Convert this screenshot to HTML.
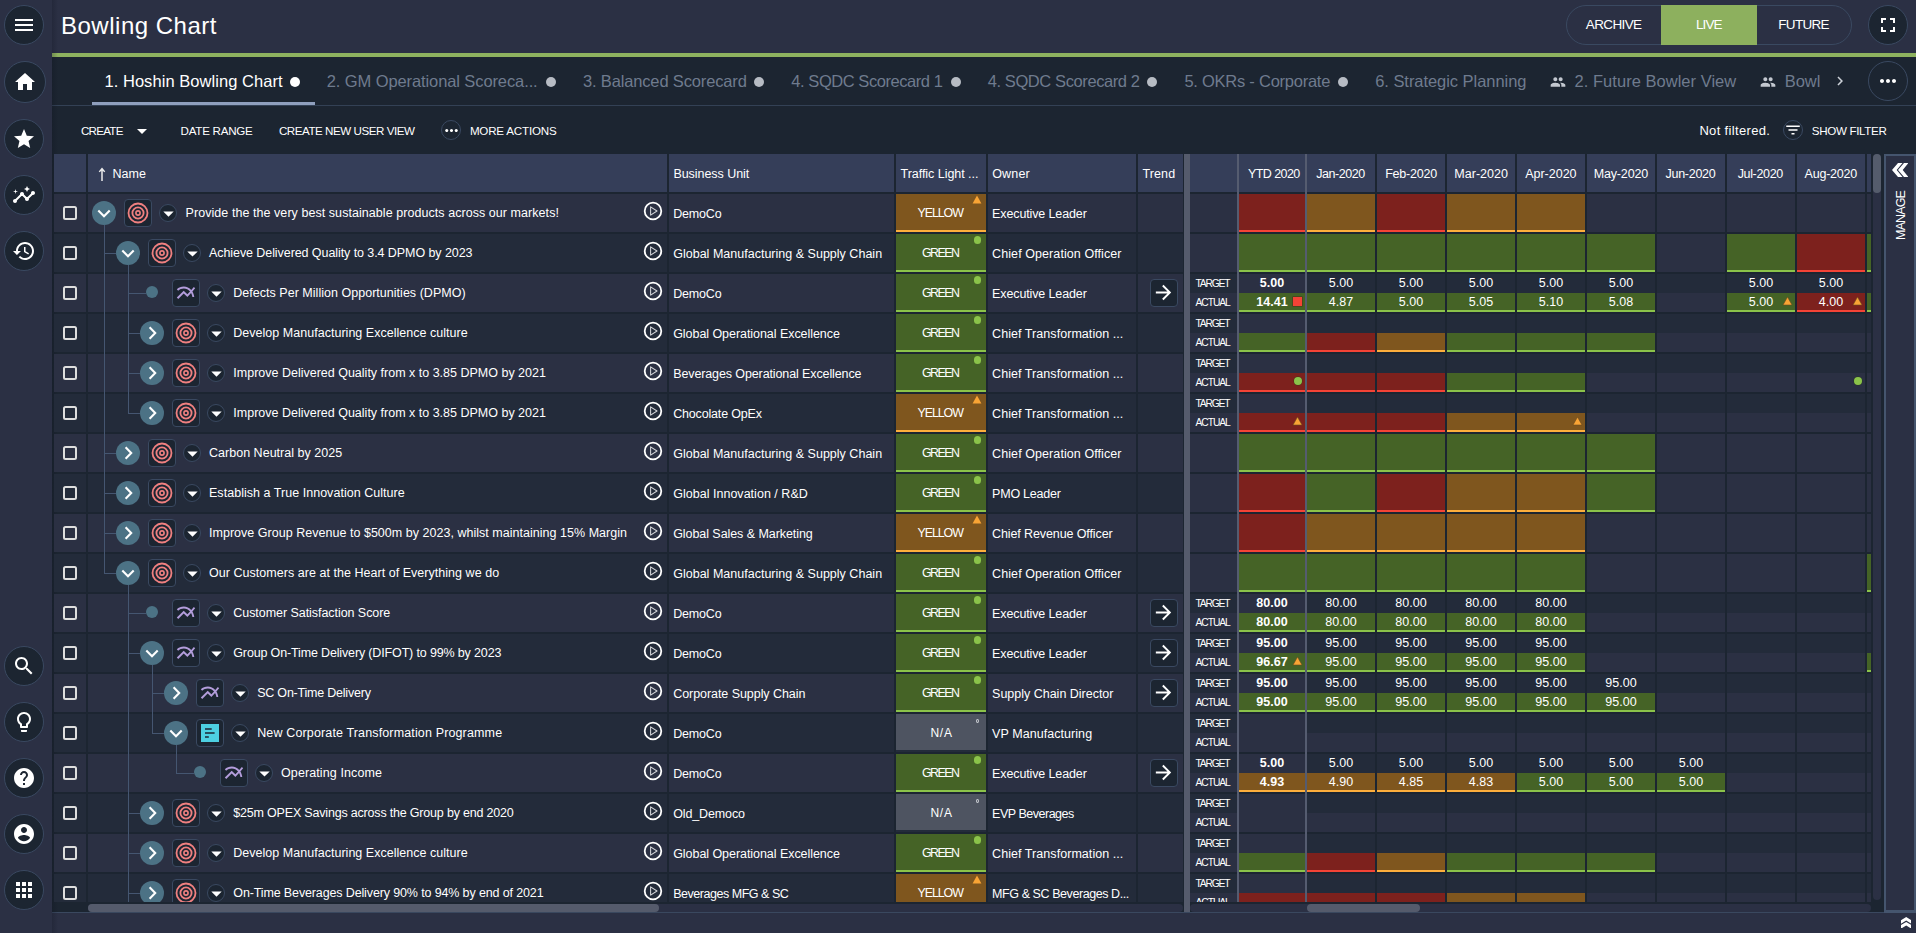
<!DOCTYPE html>
<html lang="en"><head><meta charset="utf-8"><title>Bowling Chart</title>
<style>
html,body{margin:0;padding:0;background:#1c2531;}
body{width:1916px;height:933px;position:relative;overflow:hidden;font-family:"Liberation Sans", sans-serif;color:#fff;}
body div,body svg,body span{position:absolute;}
.t{white-space:nowrap;line-height:20px;height:20px;}
#grid{left:0;top:0;width:1916px;height:902px;overflow:hidden;}
</style></head>
<body>
<div style="left:0px;top:0px;width:1916px;height:933px;background:#1c2531;"></div>
<div style="left:0px;top:0px;width:52px;height:933px;background:#2b3044;"></div>
<div style="left:52px;top:0px;width:1864px;height:53px;background:#2b3044;"></div>
<div style="left:52px;top:53px;width:1864px;height:4px;background:#8eb25f;"></div>
<div style="left:52px;top:57px;width:1864px;height:48px;background:#1c2531;"></div>
<div style="left:52px;top:105px;width:1864px;height:1px;background:#334155;"></div>
<div style="left:52px;top:912px;width:1864px;height:1px;background:#3a485f;"></div>
<div style="left:52px;top:913px;width:1864px;height:20px;background:#2b3044;"></div>
<div style="left:52px;top:0px;width:6px;height:933px;background:linear-gradient(90deg,rgba(10,14,26,.22),rgba(10,14,26,0));"></div>
<div id="grid">
<div style="left:54px;top:194px;width:32px;height:38px;background:#2b3043;"></div>
<div style="left:88px;top:194px;width:579px;height:38px;background:#2b3043;"></div>
<div style="left:669px;top:194px;width:225px;height:38px;background:#2b3043;"></div>
<div style="left:896px;top:194px;width:90px;height:38px;background:#2b3043;"></div>
<div style="left:988px;top:194px;width:148px;height:38px;background:#2b3043;"></div>
<div style="left:1138px;top:194px;width:45px;height:38px;background:#2b3043;"></div>
<div style="left:63px;top:206px;width:14px;height:14px;box-sizing:border-box;border:2px solid #dedede;border-radius:2.5px;"></div>
<div style="left:92px;top:201px;width:24px;height:24px;background:#4c7285;border-radius:50%;"></div>
<svg style="left:92px;top:201px" width="24" height="24" viewBox="0 0 24 24"><path d="M6.3 9.6 L12 15.2 L17.7 9.6" fill="none" stroke="#fff" stroke-width="2.1"/></svg>
<div style="left:124px;top:199px;width:28px;height:28px;background:#1c2531;box-sizing:border-box;border:1px solid #3a4961;border-radius:4px;"></div>
<svg style="left:124px;top:199px" width="28" height="28" viewBox="0 0 28 28"><g fill="none" stroke="#f08080"><circle cx="14" cy="14" r="9.5" stroke-width="1.8"/><circle cx="14" cy="14" r="5.6" stroke-width="1.8"/><circle cx="14" cy="14" r="2.1" stroke-width="1.6"/></g></svg>
<div style="left:159.0px;top:204.0px;width:18px;height:18px;background:#1c2531;border-radius:50%;box-sizing:border-box;border:1px solid #3a4961;"></div>
<svg style="left:155.5px;top:201px;" width="25" height="25" viewBox="0 0 24 24"><path fill="#fff" d="M7 10l5 5 5-5z"/></svg>
<svg style="left:642px;top:200px" width="22" height="22" viewBox="0 0 22 22"><circle cx="11" cy="11" r="8.3" fill="none" stroke="#fff" stroke-width="1.8"/><path d="M8.6 6.9V15.1L15 11Z" fill="none" stroke="#d4d6da" stroke-width="1.05" stroke-linejoin="round"/></svg>
<div style="left:896px;top:194px;width:90px;height:36px;background:#7f561e;"></div>
<div style="left:896px;top:230px;width:90px;height:2px;background:#fdae3c;"></div>
<svg style="left:972.2px;top:195px" width="10" height="9" viewBox="0 0 10 9"><path d="M5 .6 L9.4 8.6 H.6 Z" fill="#f9a435"/></svg>
<div style="left:1190px;top:194px;width:47px;height:38px;background:#2b3043;"></div>
<div style="left:1239px;top:194px;width:66px;height:38px;background:#2b3043;"></div>
<div style="left:1239px;top:194px;width:66px;height:36px;background:#7d211d;"></div>
<div style="left:1239px;top:230px;width:66px;height:2px;background:#f44336;"></div>
<div style="left:1307px;top:194px;width:68px;height:38px;background:#2b3043;"></div>
<div style="left:1307px;top:194px;width:68px;height:36px;background:#7f561e;"></div>
<div style="left:1307px;top:230px;width:68px;height:2px;background:#fdae3c;"></div>
<div style="left:1377px;top:194px;width:68px;height:38px;background:#2b3043;"></div>
<div style="left:1377px;top:194px;width:68px;height:36px;background:#7d211d;"></div>
<div style="left:1377px;top:230px;width:68px;height:2px;background:#f44336;"></div>
<div style="left:1447px;top:194px;width:68px;height:38px;background:#2b3043;"></div>
<div style="left:1447px;top:194px;width:68px;height:36px;background:#7f561e;"></div>
<div style="left:1447px;top:230px;width:68px;height:2px;background:#fdae3c;"></div>
<div style="left:1517px;top:194px;width:68px;height:38px;background:#2b3043;"></div>
<div style="left:1517px;top:194px;width:68px;height:36px;background:#7f561e;"></div>
<div style="left:1517px;top:230px;width:68px;height:2px;background:#fdae3c;"></div>
<div style="left:1587px;top:194px;width:68px;height:38px;background:#2b3043;"></div>
<div style="left:1657px;top:194px;width:68px;height:38px;background:#2b3043;"></div>
<div style="left:1727px;top:194px;width:68px;height:38px;background:#2b3043;"></div>
<div style="left:1797px;top:194px;width:68px;height:38px;background:#2b3043;"></div>
<div style="left:1867px;top:194px;width:4px;height:38px;background:#2b3043;"></div>
<div style="left:54px;top:234px;width:32px;height:38px;background:#232b3a;"></div>
<div style="left:88px;top:234px;width:579px;height:38px;background:#232b3a;"></div>
<div style="left:669px;top:234px;width:225px;height:38px;background:#232b3a;"></div>
<div style="left:896px;top:234px;width:90px;height:38px;background:#232b3a;"></div>
<div style="left:988px;top:234px;width:148px;height:38px;background:#232b3a;"></div>
<div style="left:1138px;top:234px;width:45px;height:38px;background:#232b3a;"></div>
<div style="left:63px;top:246px;width:14px;height:14px;box-sizing:border-box;border:2px solid #dedede;border-radius:2.5px;"></div>
<div style="left:116px;top:241px;width:24px;height:24px;background:#4c7285;border-radius:50%;"></div>
<svg style="left:116px;top:241px" width="24" height="24" viewBox="0 0 24 24"><path d="M6.3 9.6 L12 15.2 L17.7 9.6" fill="none" stroke="#fff" stroke-width="2.1"/></svg>
<div style="left:148px;top:239px;width:28px;height:28px;background:#1c2531;box-sizing:border-box;border:1px solid #3a4961;border-radius:4px;"></div>
<svg style="left:148px;top:239px" width="28" height="28" viewBox="0 0 28 28"><g fill="none" stroke="#f08080"><circle cx="14" cy="14" r="9.5" stroke-width="1.8"/><circle cx="14" cy="14" r="5.6" stroke-width="1.8"/><circle cx="14" cy="14" r="2.1" stroke-width="1.6"/></g></svg>
<div style="left:183.0px;top:244.0px;width:18px;height:18px;background:#1c2531;border-radius:50%;box-sizing:border-box;border:1px solid #3a4961;"></div>
<svg style="left:179.5px;top:241px;" width="25" height="25" viewBox="0 0 24 24"><path fill="#fff" d="M7 10l5 5 5-5z"/></svg>
<svg style="left:642px;top:240px" width="22" height="22" viewBox="0 0 22 22"><circle cx="11" cy="11" r="8.3" fill="none" stroke="#fff" stroke-width="1.8"/><path d="M8.6 6.9V15.1L15 11Z" fill="none" stroke="#d4d6da" stroke-width="1.05" stroke-linejoin="round"/></svg>
<div style="left:896px;top:234px;width:90px;height:36px;background:#456326;"></div>
<div style="left:896px;top:270px;width:90px;height:2px;background:#8bc34a;"></div>
<div style="left:973.6px;top:236.1px;width:7.7px;height:7.7px;background:#8bc34a;border-radius:50%;"></div>
<div style="left:1190px;top:234px;width:47px;height:38px;background:#2b3043;"></div>
<div style="left:1239px;top:234px;width:66px;height:38px;background:#2b3043;"></div>
<div style="left:1239px;top:234px;width:66px;height:36px;background:#456326;"></div>
<div style="left:1239px;top:270px;width:66px;height:2px;background:#8bc34a;"></div>
<div style="left:1307px;top:234px;width:68px;height:38px;background:#2b3043;"></div>
<div style="left:1307px;top:234px;width:68px;height:36px;background:#456326;"></div>
<div style="left:1307px;top:270px;width:68px;height:2px;background:#8bc34a;"></div>
<div style="left:1377px;top:234px;width:68px;height:38px;background:#2b3043;"></div>
<div style="left:1377px;top:234px;width:68px;height:36px;background:#456326;"></div>
<div style="left:1377px;top:270px;width:68px;height:2px;background:#8bc34a;"></div>
<div style="left:1447px;top:234px;width:68px;height:38px;background:#2b3043;"></div>
<div style="left:1447px;top:234px;width:68px;height:36px;background:#456326;"></div>
<div style="left:1447px;top:270px;width:68px;height:2px;background:#8bc34a;"></div>
<div style="left:1517px;top:234px;width:68px;height:38px;background:#2b3043;"></div>
<div style="left:1517px;top:234px;width:68px;height:36px;background:#456326;"></div>
<div style="left:1517px;top:270px;width:68px;height:2px;background:#8bc34a;"></div>
<div style="left:1587px;top:234px;width:68px;height:38px;background:#2b3043;"></div>
<div style="left:1587px;top:234px;width:68px;height:36px;background:#456326;"></div>
<div style="left:1587px;top:270px;width:68px;height:2px;background:#8bc34a;"></div>
<div style="left:1657px;top:234px;width:68px;height:38px;background:#2b3043;"></div>
<div style="left:1727px;top:234px;width:68px;height:38px;background:#2b3043;"></div>
<div style="left:1727px;top:234px;width:68px;height:36px;background:#456326;"></div>
<div style="left:1727px;top:270px;width:68px;height:2px;background:#8bc34a;"></div>
<div style="left:1797px;top:234px;width:68px;height:38px;background:#2b3043;"></div>
<div style="left:1797px;top:234px;width:68px;height:36px;background:#7d211d;"></div>
<div style="left:1797px;top:270px;width:68px;height:2px;background:#f44336;"></div>
<div style="left:1867px;top:234px;width:4px;height:38px;background:#2b3043;"></div>
<div style="left:1867px;top:234px;width:4px;height:36px;background:#456326;"></div>
<div style="left:1867px;top:270px;width:4px;height:2px;background:#8bc34a;"></div>
<div style="left:54px;top:274px;width:32px;height:38px;background:#2b3043;"></div>
<div style="left:88px;top:274px;width:579px;height:38px;background:#2b3043;"></div>
<div style="left:669px;top:274px;width:225px;height:38px;background:#2b3043;"></div>
<div style="left:896px;top:274px;width:90px;height:38px;background:#2b3043;"></div>
<div style="left:988px;top:274px;width:148px;height:38px;background:#2b3043;"></div>
<div style="left:1138px;top:274px;width:45px;height:38px;background:#2b3043;"></div>
<div style="left:63px;top:286px;width:14px;height:14px;box-sizing:border-box;border:2px solid #dedede;border-radius:2.5px;"></div>
<div style="left:146px;top:286px;width:12px;height:12px;background:#4c7285;border-radius:50%;"></div>
<div style="left:172px;top:279px;width:28px;height:28px;background:#1c2531;box-sizing:border-box;border:1px solid #3a4961;border-radius:4px;"></div>
<svg style="left:175px;top:281.5px;" width="22" height="22" viewBox="0 0 24 24"><path fill="#b39ddb" d="M22 6.92l-1.41-1.41-2.85 3.21C15.68 6.4 12.83 5 9.61 5 6.72 5 4.07 6.16 2 8l1.42 1.42C5.12 7.93 7.27 7 9.61 7c2.74 0 5.09 1.26 6.77 3.24l-2.88 3.24-4-4L2 16.99l1.5 1.5 6-6.01 4 4 4.05-4.55c.75 1.35 1.25 2.9 1.44 4.55H21c-.22-2.3-.95-4.39-2.04-6.14L22 6.92z"/></svg>
<div style="left:207.0px;top:284.0px;width:18px;height:18px;background:#1c2531;border-radius:50%;box-sizing:border-box;border:1px solid #3a4961;"></div>
<svg style="left:203.5px;top:281px;" width="25" height="25" viewBox="0 0 24 24"><path fill="#fff" d="M7 10l5 5 5-5z"/></svg>
<svg style="left:642px;top:280px" width="22" height="22" viewBox="0 0 22 22"><circle cx="11" cy="11" r="8.3" fill="none" stroke="#fff" stroke-width="1.8"/><path d="M8.6 6.9V15.1L15 11Z" fill="none" stroke="#d4d6da" stroke-width="1.05" stroke-linejoin="round"/></svg>
<div style="left:896px;top:274px;width:90px;height:36px;background:#456326;"></div>
<div style="left:896px;top:310px;width:90px;height:2px;background:#8bc34a;"></div>
<div style="left:973.6px;top:276.1px;width:7.7px;height:7.7px;background:#8bc34a;border-radius:50%;"></div>
<div style="left:1150px;top:279px;width:28px;height:28px;background:#1c2531;box-sizing:border-box;border:1px solid #3a4961;border-radius:4px;"></div>
<svg style="left:1152px;top:281px;" width="23" height="23" viewBox="0 0 24 24"><path fill="#fff" d="M12 4l-1.41 1.41L16.17 11H4v2h12.17l-5.58 5.59L12 20l8-8z"/></svg>
<div style="left:1190px;top:274px;width:47px;height:19px;background:#232b3a;"></div>
<div style="left:1190px;top:293px;width:47px;height:19px;background:#2b3043;"></div>
<div style="left:1239px;top:274px;width:66px;height:19px;background:#2b3043;"></div>
<div style="left:1239px;top:293px;width:66px;height:19px;background:#2b3043;"></div>
<div style="left:1239px;top:293px;width:66px;height:17px;background:#456326;"></div>
<div style="left:1239px;top:310px;width:66px;height:2px;background:#8bc34a;"></div>
<div style="left:1293.2px;top:296.5px;width:9px;height:9px;background:#f44336;box-shadow:0 0 0 .5px rgba(80,20,20,.7);"></div>
<div style="left:1307px;top:274px;width:68px;height:19px;background:#232b3a;"></div>
<div style="left:1307px;top:293px;width:68px;height:19px;background:#2b3043;"></div>
<div style="left:1307px;top:293px;width:68px;height:17px;background:#456326;"></div>
<div style="left:1307px;top:310px;width:68px;height:2px;background:#8bc34a;"></div>
<div style="left:1377px;top:274px;width:68px;height:19px;background:#232b3a;"></div>
<div style="left:1377px;top:293px;width:68px;height:19px;background:#2b3043;"></div>
<div style="left:1377px;top:293px;width:68px;height:17px;background:#456326;"></div>
<div style="left:1377px;top:310px;width:68px;height:2px;background:#8bc34a;"></div>
<div style="left:1447px;top:274px;width:68px;height:19px;background:#232b3a;"></div>
<div style="left:1447px;top:293px;width:68px;height:19px;background:#2b3043;"></div>
<div style="left:1447px;top:293px;width:68px;height:17px;background:#456326;"></div>
<div style="left:1447px;top:310px;width:68px;height:2px;background:#8bc34a;"></div>
<div style="left:1517px;top:274px;width:68px;height:19px;background:#232b3a;"></div>
<div style="left:1517px;top:293px;width:68px;height:19px;background:#2b3043;"></div>
<div style="left:1517px;top:293px;width:68px;height:17px;background:#456326;"></div>
<div style="left:1517px;top:310px;width:68px;height:2px;background:#8bc34a;"></div>
<div style="left:1587px;top:274px;width:68px;height:19px;background:#232b3a;"></div>
<div style="left:1587px;top:293px;width:68px;height:19px;background:#2b3043;"></div>
<div style="left:1587px;top:293px;width:68px;height:17px;background:#456326;"></div>
<div style="left:1587px;top:310px;width:68px;height:2px;background:#8bc34a;"></div>
<div style="left:1657px;top:274px;width:68px;height:19px;background:#232b3a;"></div>
<div style="left:1657px;top:293px;width:68px;height:19px;background:#2b3043;"></div>
<div style="left:1727px;top:274px;width:68px;height:19px;background:#232b3a;"></div>
<div style="left:1727px;top:293px;width:68px;height:19px;background:#2b3043;"></div>
<div style="left:1727px;top:293px;width:68px;height:17px;background:#456326;"></div>
<div style="left:1727px;top:310px;width:68px;height:2px;background:#8bc34a;"></div>
<svg style="left:1782.2px;top:296px" width="11" height="10" viewBox="0 0 11 10"><path d="M5.5 1 L10 9 H1 Z" fill="#f9a435" stroke="#6b4a1c" stroke-width=".6"/></svg>
<div style="left:1797px;top:274px;width:68px;height:19px;background:#232b3a;"></div>
<div style="left:1797px;top:293px;width:68px;height:19px;background:#2b3043;"></div>
<div style="left:1797px;top:293px;width:68px;height:17px;background:#7d211d;"></div>
<div style="left:1797px;top:310px;width:68px;height:2px;background:#f44336;"></div>
<svg style="left:1852.2px;top:296px" width="11" height="10" viewBox="0 0 11 10"><path d="M5.5 1 L10 9 H1 Z" fill="#f9a435" stroke="#6b4a1c" stroke-width=".6"/></svg>
<div style="left:1867px;top:274px;width:4px;height:19px;background:#232b3a;"></div>
<div style="left:1867px;top:293px;width:4px;height:19px;background:#2b3043;"></div>
<div style="left:1867px;top:293px;width:4px;height:17px;background:#456326;"></div>
<div style="left:1867px;top:310px;width:4px;height:2px;background:#8bc34a;"></div>
<div style="left:54px;top:314px;width:32px;height:38px;background:#232b3a;"></div>
<div style="left:88px;top:314px;width:579px;height:38px;background:#232b3a;"></div>
<div style="left:669px;top:314px;width:225px;height:38px;background:#232b3a;"></div>
<div style="left:896px;top:314px;width:90px;height:38px;background:#232b3a;"></div>
<div style="left:988px;top:314px;width:148px;height:38px;background:#232b3a;"></div>
<div style="left:1138px;top:314px;width:45px;height:38px;background:#232b3a;"></div>
<div style="left:63px;top:326px;width:14px;height:14px;box-sizing:border-box;border:2px solid #dedede;border-radius:2.5px;"></div>
<div style="left:140px;top:321px;width:24px;height:24px;background:#4c7285;border-radius:50%;"></div>
<svg style="left:140px;top:321px" width="24" height="24" viewBox="0 0 24 24"><path d="M9.6 6.3 L15.2 12 L9.6 17.7" fill="none" stroke="#fff" stroke-width="2.1"/></svg>
<div style="left:172px;top:319px;width:28px;height:28px;background:#1c2531;box-sizing:border-box;border:1px solid #3a4961;border-radius:4px;"></div>
<svg style="left:172px;top:319px" width="28" height="28" viewBox="0 0 28 28"><g fill="none" stroke="#f08080"><circle cx="14" cy="14" r="9.5" stroke-width="1.8"/><circle cx="14" cy="14" r="5.6" stroke-width="1.8"/><circle cx="14" cy="14" r="2.1" stroke-width="1.6"/></g></svg>
<div style="left:207.0px;top:324.0px;width:18px;height:18px;background:#1c2531;border-radius:50%;box-sizing:border-box;border:1px solid #3a4961;"></div>
<svg style="left:203.5px;top:321px;" width="25" height="25" viewBox="0 0 24 24"><path fill="#fff" d="M7 10l5 5 5-5z"/></svg>
<svg style="left:642px;top:320px" width="22" height="22" viewBox="0 0 22 22"><circle cx="11" cy="11" r="8.3" fill="none" stroke="#fff" stroke-width="1.8"/><path d="M8.6 6.9V15.1L15 11Z" fill="none" stroke="#d4d6da" stroke-width="1.05" stroke-linejoin="round"/></svg>
<div style="left:896px;top:314px;width:90px;height:36px;background:#456326;"></div>
<div style="left:896px;top:350px;width:90px;height:2px;background:#8bc34a;"></div>
<div style="left:973.6px;top:316.1px;width:7.7px;height:7.7px;background:#8bc34a;border-radius:50%;"></div>
<div style="left:1190px;top:314px;width:47px;height:19px;background:#232b3a;"></div>
<div style="left:1190px;top:333px;width:47px;height:19px;background:#2b3043;"></div>
<div style="left:1239px;top:314px;width:66px;height:19px;background:#2b3043;"></div>
<div style="left:1239px;top:333px;width:66px;height:19px;background:#2b3043;"></div>
<div style="left:1239px;top:333px;width:66px;height:17px;background:#456326;"></div>
<div style="left:1239px;top:350px;width:66px;height:2px;background:#8bc34a;"></div>
<div style="left:1307px;top:314px;width:68px;height:19px;background:#232b3a;"></div>
<div style="left:1307px;top:333px;width:68px;height:19px;background:#2b3043;"></div>
<div style="left:1307px;top:333px;width:68px;height:17px;background:#7d211d;"></div>
<div style="left:1307px;top:350px;width:68px;height:2px;background:#f44336;"></div>
<div style="left:1377px;top:314px;width:68px;height:19px;background:#232b3a;"></div>
<div style="left:1377px;top:333px;width:68px;height:19px;background:#2b3043;"></div>
<div style="left:1377px;top:333px;width:68px;height:17px;background:#7f561e;"></div>
<div style="left:1377px;top:350px;width:68px;height:2px;background:#fdae3c;"></div>
<div style="left:1447px;top:314px;width:68px;height:19px;background:#232b3a;"></div>
<div style="left:1447px;top:333px;width:68px;height:19px;background:#2b3043;"></div>
<div style="left:1447px;top:333px;width:68px;height:17px;background:#456326;"></div>
<div style="left:1447px;top:350px;width:68px;height:2px;background:#8bc34a;"></div>
<div style="left:1517px;top:314px;width:68px;height:19px;background:#232b3a;"></div>
<div style="left:1517px;top:333px;width:68px;height:19px;background:#2b3043;"></div>
<div style="left:1517px;top:333px;width:68px;height:17px;background:#456326;"></div>
<div style="left:1517px;top:350px;width:68px;height:2px;background:#8bc34a;"></div>
<div style="left:1587px;top:314px;width:68px;height:19px;background:#232b3a;"></div>
<div style="left:1587px;top:333px;width:68px;height:19px;background:#2b3043;"></div>
<div style="left:1587px;top:333px;width:68px;height:17px;background:#456326;"></div>
<div style="left:1587px;top:350px;width:68px;height:2px;background:#8bc34a;"></div>
<div style="left:1657px;top:314px;width:68px;height:19px;background:#232b3a;"></div>
<div style="left:1657px;top:333px;width:68px;height:19px;background:#2b3043;"></div>
<div style="left:1727px;top:314px;width:68px;height:19px;background:#232b3a;"></div>
<div style="left:1727px;top:333px;width:68px;height:19px;background:#2b3043;"></div>
<div style="left:1797px;top:314px;width:68px;height:19px;background:#232b3a;"></div>
<div style="left:1797px;top:333px;width:68px;height:19px;background:#2b3043;"></div>
<div style="left:1867px;top:314px;width:4px;height:19px;background:#232b3a;"></div>
<div style="left:1867px;top:333px;width:4px;height:19px;background:#2b3043;"></div>
<div style="left:54px;top:354px;width:32px;height:38px;background:#2b3043;"></div>
<div style="left:88px;top:354px;width:579px;height:38px;background:#2b3043;"></div>
<div style="left:669px;top:354px;width:225px;height:38px;background:#2b3043;"></div>
<div style="left:896px;top:354px;width:90px;height:38px;background:#2b3043;"></div>
<div style="left:988px;top:354px;width:148px;height:38px;background:#2b3043;"></div>
<div style="left:1138px;top:354px;width:45px;height:38px;background:#2b3043;"></div>
<div style="left:63px;top:366px;width:14px;height:14px;box-sizing:border-box;border:2px solid #dedede;border-radius:2.5px;"></div>
<div style="left:140px;top:361px;width:24px;height:24px;background:#4c7285;border-radius:50%;"></div>
<svg style="left:140px;top:361px" width="24" height="24" viewBox="0 0 24 24"><path d="M9.6 6.3 L15.2 12 L9.6 17.7" fill="none" stroke="#fff" stroke-width="2.1"/></svg>
<div style="left:172px;top:359px;width:28px;height:28px;background:#1c2531;box-sizing:border-box;border:1px solid #3a4961;border-radius:4px;"></div>
<svg style="left:172px;top:359px" width="28" height="28" viewBox="0 0 28 28"><g fill="none" stroke="#f08080"><circle cx="14" cy="14" r="9.5" stroke-width="1.8"/><circle cx="14" cy="14" r="5.6" stroke-width="1.8"/><circle cx="14" cy="14" r="2.1" stroke-width="1.6"/></g></svg>
<div style="left:207.0px;top:364.0px;width:18px;height:18px;background:#1c2531;border-radius:50%;box-sizing:border-box;border:1px solid #3a4961;"></div>
<svg style="left:203.5px;top:361px;" width="25" height="25" viewBox="0 0 24 24"><path fill="#fff" d="M7 10l5 5 5-5z"/></svg>
<svg style="left:642px;top:360px" width="22" height="22" viewBox="0 0 22 22"><circle cx="11" cy="11" r="8.3" fill="none" stroke="#fff" stroke-width="1.8"/><path d="M8.6 6.9V15.1L15 11Z" fill="none" stroke="#d4d6da" stroke-width="1.05" stroke-linejoin="round"/></svg>
<div style="left:896px;top:354px;width:90px;height:36px;background:#456326;"></div>
<div style="left:896px;top:390px;width:90px;height:2px;background:#8bc34a;"></div>
<div style="left:973.6px;top:356.1px;width:7.7px;height:7.7px;background:#8bc34a;border-radius:50%;"></div>
<div style="left:1190px;top:354px;width:47px;height:19px;background:#232b3a;"></div>
<div style="left:1190px;top:373px;width:47px;height:19px;background:#2b3043;"></div>
<div style="left:1239px;top:354px;width:66px;height:19px;background:#2b3043;"></div>
<div style="left:1239px;top:373px;width:66px;height:19px;background:#2b3043;"></div>
<div style="left:1239px;top:373px;width:66px;height:17px;background:#7d211d;"></div>
<div style="left:1239px;top:390px;width:66px;height:2px;background:#f44336;"></div>
<div style="left:1293.7px;top:377px;width:8px;height:8px;background:#8bc34a;border-radius:50%;box-shadow:0 0 0 .5px rgba(40,60,20,.6);"></div>
<div style="left:1307px;top:354px;width:68px;height:19px;background:#232b3a;"></div>
<div style="left:1307px;top:373px;width:68px;height:19px;background:#2b3043;"></div>
<div style="left:1307px;top:373px;width:68px;height:17px;background:#7d211d;"></div>
<div style="left:1307px;top:390px;width:68px;height:2px;background:#f44336;"></div>
<div style="left:1377px;top:354px;width:68px;height:19px;background:#232b3a;"></div>
<div style="left:1377px;top:373px;width:68px;height:19px;background:#2b3043;"></div>
<div style="left:1377px;top:373px;width:68px;height:17px;background:#7d211d;"></div>
<div style="left:1377px;top:390px;width:68px;height:2px;background:#f44336;"></div>
<div style="left:1447px;top:354px;width:68px;height:19px;background:#232b3a;"></div>
<div style="left:1447px;top:373px;width:68px;height:19px;background:#2b3043;"></div>
<div style="left:1447px;top:373px;width:68px;height:17px;background:#456326;"></div>
<div style="left:1447px;top:390px;width:68px;height:2px;background:#8bc34a;"></div>
<div style="left:1517px;top:354px;width:68px;height:19px;background:#232b3a;"></div>
<div style="left:1517px;top:373px;width:68px;height:19px;background:#2b3043;"></div>
<div style="left:1517px;top:373px;width:68px;height:17px;background:#456326;"></div>
<div style="left:1517px;top:390px;width:68px;height:2px;background:#8bc34a;"></div>
<div style="left:1587px;top:354px;width:68px;height:19px;background:#232b3a;"></div>
<div style="left:1587px;top:373px;width:68px;height:19px;background:#2b3043;"></div>
<div style="left:1657px;top:354px;width:68px;height:19px;background:#232b3a;"></div>
<div style="left:1657px;top:373px;width:68px;height:19px;background:#2b3043;"></div>
<div style="left:1727px;top:354px;width:68px;height:19px;background:#232b3a;"></div>
<div style="left:1727px;top:373px;width:68px;height:19px;background:#2b3043;"></div>
<div style="left:1797px;top:354px;width:68px;height:19px;background:#232b3a;"></div>
<div style="left:1797px;top:373px;width:68px;height:19px;background:#2b3043;"></div>
<div style="left:1853.7px;top:377px;width:8px;height:8px;background:#8bc34a;border-radius:50%;box-shadow:0 0 0 .5px rgba(40,60,20,.6);"></div>
<div style="left:1867px;top:354px;width:4px;height:19px;background:#232b3a;"></div>
<div style="left:1867px;top:373px;width:4px;height:19px;background:#2b3043;"></div>
<div style="left:54px;top:394px;width:32px;height:38px;background:#232b3a;"></div>
<div style="left:88px;top:394px;width:579px;height:38px;background:#232b3a;"></div>
<div style="left:669px;top:394px;width:225px;height:38px;background:#232b3a;"></div>
<div style="left:896px;top:394px;width:90px;height:38px;background:#232b3a;"></div>
<div style="left:988px;top:394px;width:148px;height:38px;background:#232b3a;"></div>
<div style="left:1138px;top:394px;width:45px;height:38px;background:#232b3a;"></div>
<div style="left:63px;top:406px;width:14px;height:14px;box-sizing:border-box;border:2px solid #dedede;border-radius:2.5px;"></div>
<div style="left:140px;top:401px;width:24px;height:24px;background:#4c7285;border-radius:50%;"></div>
<svg style="left:140px;top:401px" width="24" height="24" viewBox="0 0 24 24"><path d="M9.6 6.3 L15.2 12 L9.6 17.7" fill="none" stroke="#fff" stroke-width="2.1"/></svg>
<div style="left:172px;top:399px;width:28px;height:28px;background:#1c2531;box-sizing:border-box;border:1px solid #3a4961;border-radius:4px;"></div>
<svg style="left:172px;top:399px" width="28" height="28" viewBox="0 0 28 28"><g fill="none" stroke="#f08080"><circle cx="14" cy="14" r="9.5" stroke-width="1.8"/><circle cx="14" cy="14" r="5.6" stroke-width="1.8"/><circle cx="14" cy="14" r="2.1" stroke-width="1.6"/></g></svg>
<div style="left:207.0px;top:404.0px;width:18px;height:18px;background:#1c2531;border-radius:50%;box-sizing:border-box;border:1px solid #3a4961;"></div>
<svg style="left:203.5px;top:401px;" width="25" height="25" viewBox="0 0 24 24"><path fill="#fff" d="M7 10l5 5 5-5z"/></svg>
<svg style="left:642px;top:400px" width="22" height="22" viewBox="0 0 22 22"><circle cx="11" cy="11" r="8.3" fill="none" stroke="#fff" stroke-width="1.8"/><path d="M8.6 6.9V15.1L15 11Z" fill="none" stroke="#d4d6da" stroke-width="1.05" stroke-linejoin="round"/></svg>
<div style="left:896px;top:394px;width:90px;height:36px;background:#7f561e;"></div>
<div style="left:896px;top:430px;width:90px;height:2px;background:#fdae3c;"></div>
<svg style="left:972.2px;top:395px" width="10" height="9" viewBox="0 0 10 9"><path d="M5 .6 L9.4 8.6 H.6 Z" fill="#f9a435"/></svg>
<div style="left:1190px;top:394px;width:47px;height:19px;background:#232b3a;"></div>
<div style="left:1190px;top:413px;width:47px;height:19px;background:#2b3043;"></div>
<div style="left:1239px;top:394px;width:66px;height:19px;background:#2b3043;"></div>
<div style="left:1239px;top:413px;width:66px;height:19px;background:#2b3043;"></div>
<div style="left:1239px;top:413px;width:66px;height:17px;background:#7d211d;"></div>
<div style="left:1239px;top:430px;width:66px;height:2px;background:#f44336;"></div>
<svg style="left:1292.2px;top:416px" width="11" height="10" viewBox="0 0 11 10"><path d="M5.5 1 L10 9 H1 Z" fill="#f9a435" stroke="#6b4a1c" stroke-width=".6"/></svg>
<div style="left:1307px;top:394px;width:68px;height:19px;background:#232b3a;"></div>
<div style="left:1307px;top:413px;width:68px;height:19px;background:#2b3043;"></div>
<div style="left:1307px;top:413px;width:68px;height:17px;background:#7d211d;"></div>
<div style="left:1307px;top:430px;width:68px;height:2px;background:#f44336;"></div>
<div style="left:1377px;top:394px;width:68px;height:19px;background:#232b3a;"></div>
<div style="left:1377px;top:413px;width:68px;height:19px;background:#2b3043;"></div>
<div style="left:1377px;top:413px;width:68px;height:17px;background:#7d211d;"></div>
<div style="left:1377px;top:430px;width:68px;height:2px;background:#f44336;"></div>
<div style="left:1447px;top:394px;width:68px;height:19px;background:#232b3a;"></div>
<div style="left:1447px;top:413px;width:68px;height:19px;background:#2b3043;"></div>
<div style="left:1447px;top:413px;width:68px;height:17px;background:#7f561e;"></div>
<div style="left:1447px;top:430px;width:68px;height:2px;background:#fdae3c;"></div>
<div style="left:1517px;top:394px;width:68px;height:19px;background:#232b3a;"></div>
<div style="left:1517px;top:413px;width:68px;height:19px;background:#2b3043;"></div>
<div style="left:1517px;top:413px;width:68px;height:17px;background:#7f561e;"></div>
<div style="left:1517px;top:430px;width:68px;height:2px;background:#fdae3c;"></div>
<svg style="left:1572.2px;top:416px" width="11" height="10" viewBox="0 0 11 10"><path d="M5.5 1 L10 9 H1 Z" fill="#f9a435" stroke="#6b4a1c" stroke-width=".6"/></svg>
<div style="left:1587px;top:394px;width:68px;height:19px;background:#232b3a;"></div>
<div style="left:1587px;top:413px;width:68px;height:19px;background:#2b3043;"></div>
<div style="left:1657px;top:394px;width:68px;height:19px;background:#232b3a;"></div>
<div style="left:1657px;top:413px;width:68px;height:19px;background:#2b3043;"></div>
<div style="left:1727px;top:394px;width:68px;height:19px;background:#232b3a;"></div>
<div style="left:1727px;top:413px;width:68px;height:19px;background:#2b3043;"></div>
<div style="left:1797px;top:394px;width:68px;height:19px;background:#232b3a;"></div>
<div style="left:1797px;top:413px;width:68px;height:19px;background:#2b3043;"></div>
<div style="left:1867px;top:394px;width:4px;height:19px;background:#232b3a;"></div>
<div style="left:1867px;top:413px;width:4px;height:19px;background:#2b3043;"></div>
<div style="left:54px;top:434px;width:32px;height:38px;background:#2b3043;"></div>
<div style="left:88px;top:434px;width:579px;height:38px;background:#2b3043;"></div>
<div style="left:669px;top:434px;width:225px;height:38px;background:#2b3043;"></div>
<div style="left:896px;top:434px;width:90px;height:38px;background:#2b3043;"></div>
<div style="left:988px;top:434px;width:148px;height:38px;background:#2b3043;"></div>
<div style="left:1138px;top:434px;width:45px;height:38px;background:#2b3043;"></div>
<div style="left:63px;top:446px;width:14px;height:14px;box-sizing:border-box;border:2px solid #dedede;border-radius:2.5px;"></div>
<div style="left:116px;top:441px;width:24px;height:24px;background:#4c7285;border-radius:50%;"></div>
<svg style="left:116px;top:441px" width="24" height="24" viewBox="0 0 24 24"><path d="M9.6 6.3 L15.2 12 L9.6 17.7" fill="none" stroke="#fff" stroke-width="2.1"/></svg>
<div style="left:148px;top:439px;width:28px;height:28px;background:#1c2531;box-sizing:border-box;border:1px solid #3a4961;border-radius:4px;"></div>
<svg style="left:148px;top:439px" width="28" height="28" viewBox="0 0 28 28"><g fill="none" stroke="#f08080"><circle cx="14" cy="14" r="9.5" stroke-width="1.8"/><circle cx="14" cy="14" r="5.6" stroke-width="1.8"/><circle cx="14" cy="14" r="2.1" stroke-width="1.6"/></g></svg>
<div style="left:183.0px;top:444.0px;width:18px;height:18px;background:#1c2531;border-radius:50%;box-sizing:border-box;border:1px solid #3a4961;"></div>
<svg style="left:179.5px;top:441px;" width="25" height="25" viewBox="0 0 24 24"><path fill="#fff" d="M7 10l5 5 5-5z"/></svg>
<svg style="left:642px;top:440px" width="22" height="22" viewBox="0 0 22 22"><circle cx="11" cy="11" r="8.3" fill="none" stroke="#fff" stroke-width="1.8"/><path d="M8.6 6.9V15.1L15 11Z" fill="none" stroke="#d4d6da" stroke-width="1.05" stroke-linejoin="round"/></svg>
<div style="left:896px;top:434px;width:90px;height:36px;background:#456326;"></div>
<div style="left:896px;top:470px;width:90px;height:2px;background:#8bc34a;"></div>
<div style="left:973.6px;top:436.1px;width:7.7px;height:7.7px;background:#8bc34a;border-radius:50%;"></div>
<div style="left:1190px;top:434px;width:47px;height:38px;background:#2b3043;"></div>
<div style="left:1239px;top:434px;width:66px;height:38px;background:#2b3043;"></div>
<div style="left:1239px;top:434px;width:66px;height:36px;background:#456326;"></div>
<div style="left:1239px;top:470px;width:66px;height:2px;background:#8bc34a;"></div>
<div style="left:1307px;top:434px;width:68px;height:38px;background:#2b3043;"></div>
<div style="left:1307px;top:434px;width:68px;height:36px;background:#456326;"></div>
<div style="left:1307px;top:470px;width:68px;height:2px;background:#8bc34a;"></div>
<div style="left:1377px;top:434px;width:68px;height:38px;background:#2b3043;"></div>
<div style="left:1377px;top:434px;width:68px;height:36px;background:#456326;"></div>
<div style="left:1377px;top:470px;width:68px;height:2px;background:#8bc34a;"></div>
<div style="left:1447px;top:434px;width:68px;height:38px;background:#2b3043;"></div>
<div style="left:1447px;top:434px;width:68px;height:36px;background:#456326;"></div>
<div style="left:1447px;top:470px;width:68px;height:2px;background:#8bc34a;"></div>
<div style="left:1517px;top:434px;width:68px;height:38px;background:#2b3043;"></div>
<div style="left:1517px;top:434px;width:68px;height:36px;background:#456326;"></div>
<div style="left:1517px;top:470px;width:68px;height:2px;background:#8bc34a;"></div>
<div style="left:1587px;top:434px;width:68px;height:38px;background:#2b3043;"></div>
<div style="left:1587px;top:434px;width:68px;height:36px;background:#456326;"></div>
<div style="left:1587px;top:470px;width:68px;height:2px;background:#8bc34a;"></div>
<div style="left:1657px;top:434px;width:68px;height:38px;background:#2b3043;"></div>
<div style="left:1727px;top:434px;width:68px;height:38px;background:#2b3043;"></div>
<div style="left:1797px;top:434px;width:68px;height:38px;background:#2b3043;"></div>
<div style="left:1867px;top:434px;width:4px;height:38px;background:#2b3043;"></div>
<div style="left:54px;top:474px;width:32px;height:38px;background:#232b3a;"></div>
<div style="left:88px;top:474px;width:579px;height:38px;background:#232b3a;"></div>
<div style="left:669px;top:474px;width:225px;height:38px;background:#232b3a;"></div>
<div style="left:896px;top:474px;width:90px;height:38px;background:#232b3a;"></div>
<div style="left:988px;top:474px;width:148px;height:38px;background:#232b3a;"></div>
<div style="left:1138px;top:474px;width:45px;height:38px;background:#232b3a;"></div>
<div style="left:63px;top:486px;width:14px;height:14px;box-sizing:border-box;border:2px solid #dedede;border-radius:2.5px;"></div>
<div style="left:116px;top:481px;width:24px;height:24px;background:#4c7285;border-radius:50%;"></div>
<svg style="left:116px;top:481px" width="24" height="24" viewBox="0 0 24 24"><path d="M9.6 6.3 L15.2 12 L9.6 17.7" fill="none" stroke="#fff" stroke-width="2.1"/></svg>
<div style="left:148px;top:479px;width:28px;height:28px;background:#1c2531;box-sizing:border-box;border:1px solid #3a4961;border-radius:4px;"></div>
<svg style="left:148px;top:479px" width="28" height="28" viewBox="0 0 28 28"><g fill="none" stroke="#f08080"><circle cx="14" cy="14" r="9.5" stroke-width="1.8"/><circle cx="14" cy="14" r="5.6" stroke-width="1.8"/><circle cx="14" cy="14" r="2.1" stroke-width="1.6"/></g></svg>
<div style="left:183.0px;top:484.0px;width:18px;height:18px;background:#1c2531;border-radius:50%;box-sizing:border-box;border:1px solid #3a4961;"></div>
<svg style="left:179.5px;top:481px;" width="25" height="25" viewBox="0 0 24 24"><path fill="#fff" d="M7 10l5 5 5-5z"/></svg>
<svg style="left:642px;top:480px" width="22" height="22" viewBox="0 0 22 22"><circle cx="11" cy="11" r="8.3" fill="none" stroke="#fff" stroke-width="1.8"/><path d="M8.6 6.9V15.1L15 11Z" fill="none" stroke="#d4d6da" stroke-width="1.05" stroke-linejoin="round"/></svg>
<div style="left:896px;top:474px;width:90px;height:36px;background:#456326;"></div>
<div style="left:896px;top:510px;width:90px;height:2px;background:#8bc34a;"></div>
<div style="left:973.6px;top:476.1px;width:7.7px;height:7.7px;background:#8bc34a;border-radius:50%;"></div>
<div style="left:1190px;top:474px;width:47px;height:38px;background:#2b3043;"></div>
<div style="left:1239px;top:474px;width:66px;height:38px;background:#2b3043;"></div>
<div style="left:1239px;top:474px;width:66px;height:36px;background:#7d211d;"></div>
<div style="left:1239px;top:510px;width:66px;height:2px;background:#f44336;"></div>
<div style="left:1307px;top:474px;width:68px;height:38px;background:#2b3043;"></div>
<div style="left:1307px;top:474px;width:68px;height:36px;background:#456326;"></div>
<div style="left:1307px;top:510px;width:68px;height:2px;background:#8bc34a;"></div>
<div style="left:1377px;top:474px;width:68px;height:38px;background:#2b3043;"></div>
<div style="left:1377px;top:474px;width:68px;height:36px;background:#7d211d;"></div>
<div style="left:1377px;top:510px;width:68px;height:2px;background:#f44336;"></div>
<div style="left:1447px;top:474px;width:68px;height:38px;background:#2b3043;"></div>
<div style="left:1447px;top:474px;width:68px;height:36px;background:#7f561e;"></div>
<div style="left:1447px;top:510px;width:68px;height:2px;background:#fdae3c;"></div>
<div style="left:1517px;top:474px;width:68px;height:38px;background:#2b3043;"></div>
<div style="left:1517px;top:474px;width:68px;height:36px;background:#7f561e;"></div>
<div style="left:1517px;top:510px;width:68px;height:2px;background:#fdae3c;"></div>
<div style="left:1587px;top:474px;width:68px;height:38px;background:#2b3043;"></div>
<div style="left:1587px;top:474px;width:68px;height:36px;background:#456326;"></div>
<div style="left:1587px;top:510px;width:68px;height:2px;background:#8bc34a;"></div>
<div style="left:1657px;top:474px;width:68px;height:38px;background:#2b3043;"></div>
<div style="left:1727px;top:474px;width:68px;height:38px;background:#2b3043;"></div>
<div style="left:1797px;top:474px;width:68px;height:38px;background:#2b3043;"></div>
<div style="left:1867px;top:474px;width:4px;height:38px;background:#2b3043;"></div>
<div style="left:54px;top:514px;width:32px;height:38px;background:#2b3043;"></div>
<div style="left:88px;top:514px;width:579px;height:38px;background:#2b3043;"></div>
<div style="left:669px;top:514px;width:225px;height:38px;background:#2b3043;"></div>
<div style="left:896px;top:514px;width:90px;height:38px;background:#2b3043;"></div>
<div style="left:988px;top:514px;width:148px;height:38px;background:#2b3043;"></div>
<div style="left:1138px;top:514px;width:45px;height:38px;background:#2b3043;"></div>
<div style="left:63px;top:526px;width:14px;height:14px;box-sizing:border-box;border:2px solid #dedede;border-radius:2.5px;"></div>
<div style="left:116px;top:521px;width:24px;height:24px;background:#4c7285;border-radius:50%;"></div>
<svg style="left:116px;top:521px" width="24" height="24" viewBox="0 0 24 24"><path d="M9.6 6.3 L15.2 12 L9.6 17.7" fill="none" stroke="#fff" stroke-width="2.1"/></svg>
<div style="left:148px;top:519px;width:28px;height:28px;background:#1c2531;box-sizing:border-box;border:1px solid #3a4961;border-radius:4px;"></div>
<svg style="left:148px;top:519px" width="28" height="28" viewBox="0 0 28 28"><g fill="none" stroke="#f08080"><circle cx="14" cy="14" r="9.5" stroke-width="1.8"/><circle cx="14" cy="14" r="5.6" stroke-width="1.8"/><circle cx="14" cy="14" r="2.1" stroke-width="1.6"/></g></svg>
<div style="left:183.0px;top:524.0px;width:18px;height:18px;background:#1c2531;border-radius:50%;box-sizing:border-box;border:1px solid #3a4961;"></div>
<svg style="left:179.5px;top:521px;" width="25" height="25" viewBox="0 0 24 24"><path fill="#fff" d="M7 10l5 5 5-5z"/></svg>
<svg style="left:642px;top:520px" width="22" height="22" viewBox="0 0 22 22"><circle cx="11" cy="11" r="8.3" fill="none" stroke="#fff" stroke-width="1.8"/><path d="M8.6 6.9V15.1L15 11Z" fill="none" stroke="#d4d6da" stroke-width="1.05" stroke-linejoin="round"/></svg>
<div style="left:896px;top:514px;width:90px;height:36px;background:#7f561e;"></div>
<div style="left:896px;top:550px;width:90px;height:2px;background:#fdae3c;"></div>
<svg style="left:972.2px;top:515px" width="10" height="9" viewBox="0 0 10 9"><path d="M5 .6 L9.4 8.6 H.6 Z" fill="#f9a435"/></svg>
<div style="left:1190px;top:514px;width:47px;height:38px;background:#2b3043;"></div>
<div style="left:1239px;top:514px;width:66px;height:38px;background:#2b3043;"></div>
<div style="left:1239px;top:514px;width:66px;height:36px;background:#7d211d;"></div>
<div style="left:1239px;top:550px;width:66px;height:2px;background:#f44336;"></div>
<div style="left:1307px;top:514px;width:68px;height:38px;background:#2b3043;"></div>
<div style="left:1307px;top:514px;width:68px;height:36px;background:#7f561e;"></div>
<div style="left:1307px;top:550px;width:68px;height:2px;background:#fdae3c;"></div>
<div style="left:1377px;top:514px;width:68px;height:38px;background:#2b3043;"></div>
<div style="left:1377px;top:514px;width:68px;height:36px;background:#7f561e;"></div>
<div style="left:1377px;top:550px;width:68px;height:2px;background:#fdae3c;"></div>
<div style="left:1447px;top:514px;width:68px;height:38px;background:#2b3043;"></div>
<div style="left:1447px;top:514px;width:68px;height:36px;background:#7f561e;"></div>
<div style="left:1447px;top:550px;width:68px;height:2px;background:#fdae3c;"></div>
<div style="left:1517px;top:514px;width:68px;height:38px;background:#2b3043;"></div>
<div style="left:1517px;top:514px;width:68px;height:36px;background:#7f561e;"></div>
<div style="left:1517px;top:550px;width:68px;height:2px;background:#fdae3c;"></div>
<div style="left:1587px;top:514px;width:68px;height:38px;background:#2b3043;"></div>
<div style="left:1657px;top:514px;width:68px;height:38px;background:#2b3043;"></div>
<div style="left:1727px;top:514px;width:68px;height:38px;background:#2b3043;"></div>
<div style="left:1797px;top:514px;width:68px;height:38px;background:#2b3043;"></div>
<div style="left:1867px;top:514px;width:4px;height:38px;background:#2b3043;"></div>
<div style="left:54px;top:554px;width:32px;height:38px;background:#232b3a;"></div>
<div style="left:88px;top:554px;width:579px;height:38px;background:#232b3a;"></div>
<div style="left:669px;top:554px;width:225px;height:38px;background:#232b3a;"></div>
<div style="left:896px;top:554px;width:90px;height:38px;background:#232b3a;"></div>
<div style="left:988px;top:554px;width:148px;height:38px;background:#232b3a;"></div>
<div style="left:1138px;top:554px;width:45px;height:38px;background:#232b3a;"></div>
<div style="left:63px;top:566px;width:14px;height:14px;box-sizing:border-box;border:2px solid #dedede;border-radius:2.5px;"></div>
<div style="left:116px;top:561px;width:24px;height:24px;background:#4c7285;border-radius:50%;"></div>
<svg style="left:116px;top:561px" width="24" height="24" viewBox="0 0 24 24"><path d="M6.3 9.6 L12 15.2 L17.7 9.6" fill="none" stroke="#fff" stroke-width="2.1"/></svg>
<div style="left:148px;top:559px;width:28px;height:28px;background:#1c2531;box-sizing:border-box;border:1px solid #3a4961;border-radius:4px;"></div>
<svg style="left:148px;top:559px" width="28" height="28" viewBox="0 0 28 28"><g fill="none" stroke="#f08080"><circle cx="14" cy="14" r="9.5" stroke-width="1.8"/><circle cx="14" cy="14" r="5.6" stroke-width="1.8"/><circle cx="14" cy="14" r="2.1" stroke-width="1.6"/></g></svg>
<div style="left:183.0px;top:564.0px;width:18px;height:18px;background:#1c2531;border-radius:50%;box-sizing:border-box;border:1px solid #3a4961;"></div>
<svg style="left:179.5px;top:561px;" width="25" height="25" viewBox="0 0 24 24"><path fill="#fff" d="M7 10l5 5 5-5z"/></svg>
<svg style="left:642px;top:560px" width="22" height="22" viewBox="0 0 22 22"><circle cx="11" cy="11" r="8.3" fill="none" stroke="#fff" stroke-width="1.8"/><path d="M8.6 6.9V15.1L15 11Z" fill="none" stroke="#d4d6da" stroke-width="1.05" stroke-linejoin="round"/></svg>
<div style="left:896px;top:554px;width:90px;height:36px;background:#456326;"></div>
<div style="left:896px;top:590px;width:90px;height:2px;background:#8bc34a;"></div>
<div style="left:973.6px;top:556.1px;width:7.7px;height:7.7px;background:#8bc34a;border-radius:50%;"></div>
<div style="left:1190px;top:554px;width:47px;height:38px;background:#2b3043;"></div>
<div style="left:1239px;top:554px;width:66px;height:38px;background:#2b3043;"></div>
<div style="left:1239px;top:554px;width:66px;height:36px;background:#456326;"></div>
<div style="left:1239px;top:590px;width:66px;height:2px;background:#8bc34a;"></div>
<div style="left:1307px;top:554px;width:68px;height:38px;background:#2b3043;"></div>
<div style="left:1307px;top:554px;width:68px;height:36px;background:#456326;"></div>
<div style="left:1307px;top:590px;width:68px;height:2px;background:#8bc34a;"></div>
<div style="left:1377px;top:554px;width:68px;height:38px;background:#2b3043;"></div>
<div style="left:1377px;top:554px;width:68px;height:36px;background:#456326;"></div>
<div style="left:1377px;top:590px;width:68px;height:2px;background:#8bc34a;"></div>
<div style="left:1447px;top:554px;width:68px;height:38px;background:#2b3043;"></div>
<div style="left:1447px;top:554px;width:68px;height:36px;background:#456326;"></div>
<div style="left:1447px;top:590px;width:68px;height:2px;background:#8bc34a;"></div>
<div style="left:1517px;top:554px;width:68px;height:38px;background:#2b3043;"></div>
<div style="left:1517px;top:554px;width:68px;height:36px;background:#456326;"></div>
<div style="left:1517px;top:590px;width:68px;height:2px;background:#8bc34a;"></div>
<div style="left:1587px;top:554px;width:68px;height:38px;background:#2b3043;"></div>
<div style="left:1657px;top:554px;width:68px;height:38px;background:#2b3043;"></div>
<div style="left:1727px;top:554px;width:68px;height:38px;background:#2b3043;"></div>
<div style="left:1797px;top:554px;width:68px;height:38px;background:#2b3043;"></div>
<div style="left:1867px;top:554px;width:4px;height:38px;background:#2b3043;"></div>
<div style="left:1867px;top:554px;width:4px;height:36px;background:#456326;"></div>
<div style="left:1867px;top:590px;width:4px;height:2px;background:#8bc34a;"></div>
<div style="left:54px;top:594px;width:32px;height:38px;background:#2b3043;"></div>
<div style="left:88px;top:594px;width:579px;height:38px;background:#2b3043;"></div>
<div style="left:669px;top:594px;width:225px;height:38px;background:#2b3043;"></div>
<div style="left:896px;top:594px;width:90px;height:38px;background:#2b3043;"></div>
<div style="left:988px;top:594px;width:148px;height:38px;background:#2b3043;"></div>
<div style="left:1138px;top:594px;width:45px;height:38px;background:#2b3043;"></div>
<div style="left:63px;top:606px;width:14px;height:14px;box-sizing:border-box;border:2px solid #dedede;border-radius:2.5px;"></div>
<div style="left:146px;top:606px;width:12px;height:12px;background:#4c7285;border-radius:50%;"></div>
<div style="left:172px;top:599px;width:28px;height:28px;background:#1c2531;box-sizing:border-box;border:1px solid #3a4961;border-radius:4px;"></div>
<svg style="left:175px;top:601.5px;" width="22" height="22" viewBox="0 0 24 24"><path fill="#b39ddb" d="M22 6.92l-1.41-1.41-2.85 3.21C15.68 6.4 12.83 5 9.61 5 6.72 5 4.07 6.16 2 8l1.42 1.42C5.12 7.93 7.27 7 9.61 7c2.74 0 5.09 1.26 6.77 3.24l-2.88 3.24-4-4L2 16.99l1.5 1.5 6-6.01 4 4 4.05-4.55c.75 1.35 1.25 2.9 1.44 4.55H21c-.22-2.3-.95-4.39-2.04-6.14L22 6.92z"/></svg>
<div style="left:207.0px;top:604.0px;width:18px;height:18px;background:#1c2531;border-radius:50%;box-sizing:border-box;border:1px solid #3a4961;"></div>
<svg style="left:203.5px;top:601px;" width="25" height="25" viewBox="0 0 24 24"><path fill="#fff" d="M7 10l5 5 5-5z"/></svg>
<svg style="left:642px;top:600px" width="22" height="22" viewBox="0 0 22 22"><circle cx="11" cy="11" r="8.3" fill="none" stroke="#fff" stroke-width="1.8"/><path d="M8.6 6.9V15.1L15 11Z" fill="none" stroke="#d4d6da" stroke-width="1.05" stroke-linejoin="round"/></svg>
<div style="left:896px;top:594px;width:90px;height:36px;background:#456326;"></div>
<div style="left:896px;top:630px;width:90px;height:2px;background:#8bc34a;"></div>
<div style="left:973.6px;top:596.1px;width:7.7px;height:7.7px;background:#8bc34a;border-radius:50%;"></div>
<div style="left:1150px;top:599px;width:28px;height:28px;background:#1c2531;box-sizing:border-box;border:1px solid #3a4961;border-radius:4px;"></div>
<svg style="left:1152px;top:601px;" width="23" height="23" viewBox="0 0 24 24"><path fill="#fff" d="M12 4l-1.41 1.41L16.17 11H4v2h12.17l-5.58 5.59L12 20l8-8z"/></svg>
<div style="left:1190px;top:594px;width:47px;height:19px;background:#232b3a;"></div>
<div style="left:1190px;top:613px;width:47px;height:19px;background:#2b3043;"></div>
<div style="left:1239px;top:594px;width:66px;height:19px;background:#2b3043;"></div>
<div style="left:1239px;top:613px;width:66px;height:19px;background:#2b3043;"></div>
<div style="left:1239px;top:613px;width:66px;height:17px;background:#456326;"></div>
<div style="left:1239px;top:630px;width:66px;height:2px;background:#8bc34a;"></div>
<div style="left:1307px;top:594px;width:68px;height:19px;background:#232b3a;"></div>
<div style="left:1307px;top:613px;width:68px;height:19px;background:#2b3043;"></div>
<div style="left:1307px;top:613px;width:68px;height:17px;background:#456326;"></div>
<div style="left:1307px;top:630px;width:68px;height:2px;background:#8bc34a;"></div>
<div style="left:1377px;top:594px;width:68px;height:19px;background:#232b3a;"></div>
<div style="left:1377px;top:613px;width:68px;height:19px;background:#2b3043;"></div>
<div style="left:1377px;top:613px;width:68px;height:17px;background:#456326;"></div>
<div style="left:1377px;top:630px;width:68px;height:2px;background:#8bc34a;"></div>
<div style="left:1447px;top:594px;width:68px;height:19px;background:#232b3a;"></div>
<div style="left:1447px;top:613px;width:68px;height:19px;background:#2b3043;"></div>
<div style="left:1447px;top:613px;width:68px;height:17px;background:#456326;"></div>
<div style="left:1447px;top:630px;width:68px;height:2px;background:#8bc34a;"></div>
<div style="left:1517px;top:594px;width:68px;height:19px;background:#232b3a;"></div>
<div style="left:1517px;top:613px;width:68px;height:19px;background:#2b3043;"></div>
<div style="left:1517px;top:613px;width:68px;height:17px;background:#456326;"></div>
<div style="left:1517px;top:630px;width:68px;height:2px;background:#8bc34a;"></div>
<div style="left:1587px;top:594px;width:68px;height:19px;background:#232b3a;"></div>
<div style="left:1587px;top:613px;width:68px;height:19px;background:#2b3043;"></div>
<div style="left:1657px;top:594px;width:68px;height:19px;background:#232b3a;"></div>
<div style="left:1657px;top:613px;width:68px;height:19px;background:#2b3043;"></div>
<div style="left:1727px;top:594px;width:68px;height:19px;background:#232b3a;"></div>
<div style="left:1727px;top:613px;width:68px;height:19px;background:#2b3043;"></div>
<div style="left:1797px;top:594px;width:68px;height:19px;background:#232b3a;"></div>
<div style="left:1797px;top:613px;width:68px;height:19px;background:#2b3043;"></div>
<div style="left:1867px;top:594px;width:4px;height:19px;background:#232b3a;"></div>
<div style="left:1867px;top:613px;width:4px;height:19px;background:#2b3043;"></div>
<div style="left:54px;top:634px;width:32px;height:38px;background:#232b3a;"></div>
<div style="left:88px;top:634px;width:579px;height:38px;background:#232b3a;"></div>
<div style="left:669px;top:634px;width:225px;height:38px;background:#232b3a;"></div>
<div style="left:896px;top:634px;width:90px;height:38px;background:#232b3a;"></div>
<div style="left:988px;top:634px;width:148px;height:38px;background:#232b3a;"></div>
<div style="left:1138px;top:634px;width:45px;height:38px;background:#232b3a;"></div>
<div style="left:63px;top:646px;width:14px;height:14px;box-sizing:border-box;border:2px solid #dedede;border-radius:2.5px;"></div>
<div style="left:140px;top:641px;width:24px;height:24px;background:#4c7285;border-radius:50%;"></div>
<svg style="left:140px;top:641px" width="24" height="24" viewBox="0 0 24 24"><path d="M6.3 9.6 L12 15.2 L17.7 9.6" fill="none" stroke="#fff" stroke-width="2.1"/></svg>
<div style="left:172px;top:639px;width:28px;height:28px;background:#1c2531;box-sizing:border-box;border:1px solid #3a4961;border-radius:4px;"></div>
<svg style="left:175px;top:641.5px;" width="22" height="22" viewBox="0 0 24 24"><path fill="#b39ddb" d="M22 6.92l-1.41-1.41-2.85 3.21C15.68 6.4 12.83 5 9.61 5 6.72 5 4.07 6.16 2 8l1.42 1.42C5.12 7.93 7.27 7 9.61 7c2.74 0 5.09 1.26 6.77 3.24l-2.88 3.24-4-4L2 16.99l1.5 1.5 6-6.01 4 4 4.05-4.55c.75 1.35 1.25 2.9 1.44 4.55H21c-.22-2.3-.95-4.39-2.04-6.14L22 6.92z"/></svg>
<div style="left:207.0px;top:644.0px;width:18px;height:18px;background:#1c2531;border-radius:50%;box-sizing:border-box;border:1px solid #3a4961;"></div>
<svg style="left:203.5px;top:641px;" width="25" height="25" viewBox="0 0 24 24"><path fill="#fff" d="M7 10l5 5 5-5z"/></svg>
<svg style="left:642px;top:640px" width="22" height="22" viewBox="0 0 22 22"><circle cx="11" cy="11" r="8.3" fill="none" stroke="#fff" stroke-width="1.8"/><path d="M8.6 6.9V15.1L15 11Z" fill="none" stroke="#d4d6da" stroke-width="1.05" stroke-linejoin="round"/></svg>
<div style="left:896px;top:634px;width:90px;height:36px;background:#456326;"></div>
<div style="left:896px;top:670px;width:90px;height:2px;background:#8bc34a;"></div>
<div style="left:973.6px;top:636.1px;width:7.7px;height:7.7px;background:#8bc34a;border-radius:50%;"></div>
<div style="left:1150px;top:639px;width:28px;height:28px;background:#1c2531;box-sizing:border-box;border:1px solid #3a4961;border-radius:4px;"></div>
<svg style="left:1152px;top:641px;" width="23" height="23" viewBox="0 0 24 24"><path fill="#fff" d="M12 4l-1.41 1.41L16.17 11H4v2h12.17l-5.58 5.59L12 20l8-8z"/></svg>
<div style="left:1190px;top:634px;width:47px;height:19px;background:#232b3a;"></div>
<div style="left:1190px;top:653px;width:47px;height:19px;background:#2b3043;"></div>
<div style="left:1239px;top:634px;width:66px;height:19px;background:#2b3043;"></div>
<div style="left:1239px;top:653px;width:66px;height:19px;background:#2b3043;"></div>
<div style="left:1239px;top:653px;width:66px;height:17px;background:#456326;"></div>
<div style="left:1239px;top:670px;width:66px;height:2px;background:#8bc34a;"></div>
<svg style="left:1292.2px;top:656px" width="11" height="10" viewBox="0 0 11 10"><path d="M5.5 1 L10 9 H1 Z" fill="#f9a435" stroke="#6b4a1c" stroke-width=".6"/></svg>
<div style="left:1307px;top:634px;width:68px;height:19px;background:#232b3a;"></div>
<div style="left:1307px;top:653px;width:68px;height:19px;background:#2b3043;"></div>
<div style="left:1307px;top:653px;width:68px;height:17px;background:#456326;"></div>
<div style="left:1307px;top:670px;width:68px;height:2px;background:#8bc34a;"></div>
<div style="left:1377px;top:634px;width:68px;height:19px;background:#232b3a;"></div>
<div style="left:1377px;top:653px;width:68px;height:19px;background:#2b3043;"></div>
<div style="left:1377px;top:653px;width:68px;height:17px;background:#456326;"></div>
<div style="left:1377px;top:670px;width:68px;height:2px;background:#8bc34a;"></div>
<div style="left:1447px;top:634px;width:68px;height:19px;background:#232b3a;"></div>
<div style="left:1447px;top:653px;width:68px;height:19px;background:#2b3043;"></div>
<div style="left:1447px;top:653px;width:68px;height:17px;background:#456326;"></div>
<div style="left:1447px;top:670px;width:68px;height:2px;background:#8bc34a;"></div>
<div style="left:1517px;top:634px;width:68px;height:19px;background:#232b3a;"></div>
<div style="left:1517px;top:653px;width:68px;height:19px;background:#2b3043;"></div>
<div style="left:1517px;top:653px;width:68px;height:17px;background:#456326;"></div>
<div style="left:1517px;top:670px;width:68px;height:2px;background:#8bc34a;"></div>
<div style="left:1587px;top:634px;width:68px;height:19px;background:#232b3a;"></div>
<div style="left:1587px;top:653px;width:68px;height:19px;background:#2b3043;"></div>
<div style="left:1657px;top:634px;width:68px;height:19px;background:#232b3a;"></div>
<div style="left:1657px;top:653px;width:68px;height:19px;background:#2b3043;"></div>
<div style="left:1727px;top:634px;width:68px;height:19px;background:#232b3a;"></div>
<div style="left:1727px;top:653px;width:68px;height:19px;background:#2b3043;"></div>
<div style="left:1797px;top:634px;width:68px;height:19px;background:#232b3a;"></div>
<div style="left:1797px;top:653px;width:68px;height:19px;background:#2b3043;"></div>
<div style="left:1867px;top:634px;width:4px;height:19px;background:#232b3a;"></div>
<div style="left:1867px;top:653px;width:4px;height:19px;background:#2b3043;"></div>
<div style="left:1867px;top:653px;width:4px;height:17px;background:#456326;"></div>
<div style="left:1867px;top:670px;width:4px;height:2px;background:#8bc34a;"></div>
<div style="left:54px;top:674px;width:32px;height:38px;background:#2b3043;"></div>
<div style="left:88px;top:674px;width:579px;height:38px;background:#2b3043;"></div>
<div style="left:669px;top:674px;width:225px;height:38px;background:#2b3043;"></div>
<div style="left:896px;top:674px;width:90px;height:38px;background:#2b3043;"></div>
<div style="left:988px;top:674px;width:148px;height:38px;background:#2b3043;"></div>
<div style="left:1138px;top:674px;width:45px;height:38px;background:#2b3043;"></div>
<div style="left:63px;top:686px;width:14px;height:14px;box-sizing:border-box;border:2px solid #dedede;border-radius:2.5px;"></div>
<div style="left:164px;top:681px;width:24px;height:24px;background:#4c7285;border-radius:50%;"></div>
<svg style="left:164px;top:681px" width="24" height="24" viewBox="0 0 24 24"><path d="M9.6 6.3 L15.2 12 L9.6 17.7" fill="none" stroke="#fff" stroke-width="2.1"/></svg>
<div style="left:196px;top:679px;width:28px;height:28px;background:#1c2531;box-sizing:border-box;border:1px solid #3a4961;border-radius:4px;"></div>
<svg style="left:199px;top:681.5px;" width="22" height="22" viewBox="0 0 24 24"><path fill="#b39ddb" d="M22 6.92l-1.41-1.41-2.85 3.21C15.68 6.4 12.83 5 9.61 5 6.72 5 4.07 6.16 2 8l1.42 1.42C5.12 7.93 7.27 7 9.61 7c2.74 0 5.09 1.26 6.77 3.24l-2.88 3.24-4-4L2 16.99l1.5 1.5 6-6.01 4 4 4.05-4.55c.75 1.35 1.25 2.9 1.44 4.55H21c-.22-2.3-.95-4.39-2.04-6.14L22 6.92z"/></svg>
<div style="left:231.0px;top:684.0px;width:18px;height:18px;background:#1c2531;border-radius:50%;box-sizing:border-box;border:1px solid #3a4961;"></div>
<svg style="left:227.5px;top:681px;" width="25" height="25" viewBox="0 0 24 24"><path fill="#fff" d="M7 10l5 5 5-5z"/></svg>
<svg style="left:642px;top:680px" width="22" height="22" viewBox="0 0 22 22"><circle cx="11" cy="11" r="8.3" fill="none" stroke="#fff" stroke-width="1.8"/><path d="M8.6 6.9V15.1L15 11Z" fill="none" stroke="#d4d6da" stroke-width="1.05" stroke-linejoin="round"/></svg>
<div style="left:896px;top:674px;width:90px;height:36px;background:#456326;"></div>
<div style="left:896px;top:710px;width:90px;height:2px;background:#8bc34a;"></div>
<div style="left:973.6px;top:676.1px;width:7.7px;height:7.7px;background:#8bc34a;border-radius:50%;"></div>
<div style="left:1150px;top:679px;width:28px;height:28px;background:#1c2531;box-sizing:border-box;border:1px solid #3a4961;border-radius:4px;"></div>
<svg style="left:1152px;top:681px;" width="23" height="23" viewBox="0 0 24 24"><path fill="#fff" d="M12 4l-1.41 1.41L16.17 11H4v2h12.17l-5.58 5.59L12 20l8-8z"/></svg>
<div style="left:1190px;top:674px;width:47px;height:19px;background:#232b3a;"></div>
<div style="left:1190px;top:693px;width:47px;height:19px;background:#2b3043;"></div>
<div style="left:1239px;top:674px;width:66px;height:19px;background:#2b3043;"></div>
<div style="left:1239px;top:693px;width:66px;height:19px;background:#2b3043;"></div>
<div style="left:1239px;top:693px;width:66px;height:17px;background:#456326;"></div>
<div style="left:1239px;top:710px;width:66px;height:2px;background:#8bc34a;"></div>
<div style="left:1307px;top:674px;width:68px;height:19px;background:#232b3a;"></div>
<div style="left:1307px;top:693px;width:68px;height:19px;background:#2b3043;"></div>
<div style="left:1307px;top:693px;width:68px;height:17px;background:#456326;"></div>
<div style="left:1307px;top:710px;width:68px;height:2px;background:#8bc34a;"></div>
<div style="left:1377px;top:674px;width:68px;height:19px;background:#232b3a;"></div>
<div style="left:1377px;top:693px;width:68px;height:19px;background:#2b3043;"></div>
<div style="left:1377px;top:693px;width:68px;height:17px;background:#456326;"></div>
<div style="left:1377px;top:710px;width:68px;height:2px;background:#8bc34a;"></div>
<div style="left:1447px;top:674px;width:68px;height:19px;background:#232b3a;"></div>
<div style="left:1447px;top:693px;width:68px;height:19px;background:#2b3043;"></div>
<div style="left:1447px;top:693px;width:68px;height:17px;background:#456326;"></div>
<div style="left:1447px;top:710px;width:68px;height:2px;background:#8bc34a;"></div>
<div style="left:1517px;top:674px;width:68px;height:19px;background:#232b3a;"></div>
<div style="left:1517px;top:693px;width:68px;height:19px;background:#2b3043;"></div>
<div style="left:1517px;top:693px;width:68px;height:17px;background:#456326;"></div>
<div style="left:1517px;top:710px;width:68px;height:2px;background:#8bc34a;"></div>
<div style="left:1587px;top:674px;width:68px;height:19px;background:#232b3a;"></div>
<div style="left:1587px;top:693px;width:68px;height:19px;background:#2b3043;"></div>
<div style="left:1587px;top:693px;width:68px;height:17px;background:#456326;"></div>
<div style="left:1587px;top:710px;width:68px;height:2px;background:#8bc34a;"></div>
<div style="left:1657px;top:674px;width:68px;height:19px;background:#232b3a;"></div>
<div style="left:1657px;top:693px;width:68px;height:19px;background:#2b3043;"></div>
<div style="left:1727px;top:674px;width:68px;height:19px;background:#232b3a;"></div>
<div style="left:1727px;top:693px;width:68px;height:19px;background:#2b3043;"></div>
<div style="left:1797px;top:674px;width:68px;height:19px;background:#232b3a;"></div>
<div style="left:1797px;top:693px;width:68px;height:19px;background:#2b3043;"></div>
<div style="left:1867px;top:674px;width:4px;height:19px;background:#232b3a;"></div>
<div style="left:1867px;top:693px;width:4px;height:19px;background:#2b3043;"></div>
<div style="left:54px;top:714px;width:32px;height:38px;background:#232b3a;"></div>
<div style="left:88px;top:714px;width:579px;height:38px;background:#232b3a;"></div>
<div style="left:669px;top:714px;width:225px;height:38px;background:#232b3a;"></div>
<div style="left:896px;top:714px;width:90px;height:38px;background:#232b3a;"></div>
<div style="left:988px;top:714px;width:148px;height:38px;background:#232b3a;"></div>
<div style="left:1138px;top:714px;width:45px;height:38px;background:#232b3a;"></div>
<div style="left:63px;top:726px;width:14px;height:14px;box-sizing:border-box;border:2px solid #dedede;border-radius:2.5px;"></div>
<div style="left:164px;top:721px;width:24px;height:24px;background:#4c7285;border-radius:50%;"></div>
<svg style="left:164px;top:721px" width="24" height="24" viewBox="0 0 24 24"><path d="M6.3 9.6 L12 15.2 L17.7 9.6" fill="none" stroke="#fff" stroke-width="2.1"/></svg>
<div style="left:196px;top:719px;width:28px;height:28px;background:#1c2531;box-sizing:border-box;border:1px solid #3a4961;border-radius:4px;"></div>
<svg style="left:198px;top:721px" width="24" height="24" viewBox="0 0 24 24"><rect x="3" y="3" width="18" height="18" fill="#4dd0e1"/><path d="M7 8h6.7M7 12h9.6M7 16h3.8" stroke="#1c2433" stroke-width="1.6"/></svg>
<div style="left:231.0px;top:724.0px;width:18px;height:18px;background:#1c2531;border-radius:50%;box-sizing:border-box;border:1px solid #3a4961;"></div>
<svg style="left:227.5px;top:721px;" width="25" height="25" viewBox="0 0 24 24"><path fill="#fff" d="M7 10l5 5 5-5z"/></svg>
<svg style="left:642px;top:720px" width="22" height="22" viewBox="0 0 22 22"><circle cx="11" cy="11" r="8.3" fill="none" stroke="#fff" stroke-width="1.8"/><path d="M8.6 6.9V15.1L15 11Z" fill="none" stroke="#d4d6da" stroke-width="1.05" stroke-linejoin="round"/></svg>
<div style="left:896px;top:714px;width:90px;height:36px;background:#4e5461;"></div>
<div style="left:976px;top:718.5px;width:3px;height:4px;box-sizing:border-box;border:.8px solid #c9ccd2;border-radius:50%;"></div>
<div style="left:1190px;top:714px;width:47px;height:19px;background:#232b3a;"></div>
<div style="left:1190px;top:733px;width:47px;height:19px;background:#2b3043;"></div>
<div style="left:1239px;top:714px;width:66px;height:19px;background:#2b3043;"></div>
<div style="left:1239px;top:733px;width:66px;height:19px;background:#2b3043;"></div>
<div style="left:1307px;top:714px;width:68px;height:19px;background:#232b3a;"></div>
<div style="left:1307px;top:733px;width:68px;height:19px;background:#2b3043;"></div>
<div style="left:1377px;top:714px;width:68px;height:19px;background:#232b3a;"></div>
<div style="left:1377px;top:733px;width:68px;height:19px;background:#2b3043;"></div>
<div style="left:1447px;top:714px;width:68px;height:19px;background:#232b3a;"></div>
<div style="left:1447px;top:733px;width:68px;height:19px;background:#2b3043;"></div>
<div style="left:1517px;top:714px;width:68px;height:19px;background:#232b3a;"></div>
<div style="left:1517px;top:733px;width:68px;height:19px;background:#2b3043;"></div>
<div style="left:1587px;top:714px;width:68px;height:19px;background:#232b3a;"></div>
<div style="left:1587px;top:733px;width:68px;height:19px;background:#2b3043;"></div>
<div style="left:1657px;top:714px;width:68px;height:19px;background:#232b3a;"></div>
<div style="left:1657px;top:733px;width:68px;height:19px;background:#2b3043;"></div>
<div style="left:1727px;top:714px;width:68px;height:19px;background:#232b3a;"></div>
<div style="left:1727px;top:733px;width:68px;height:19px;background:#2b3043;"></div>
<div style="left:1797px;top:714px;width:68px;height:19px;background:#232b3a;"></div>
<div style="left:1797px;top:733px;width:68px;height:19px;background:#2b3043;"></div>
<div style="left:1867px;top:714px;width:4px;height:19px;background:#232b3a;"></div>
<div style="left:1867px;top:733px;width:4px;height:19px;background:#2b3043;"></div>
<div style="left:54px;top:754px;width:32px;height:38px;background:#2b3043;"></div>
<div style="left:88px;top:754px;width:579px;height:38px;background:#2b3043;"></div>
<div style="left:669px;top:754px;width:225px;height:38px;background:#2b3043;"></div>
<div style="left:896px;top:754px;width:90px;height:38px;background:#2b3043;"></div>
<div style="left:988px;top:754px;width:148px;height:38px;background:#2b3043;"></div>
<div style="left:1138px;top:754px;width:45px;height:38px;background:#2b3043;"></div>
<div style="left:63px;top:766px;width:14px;height:14px;box-sizing:border-box;border:2px solid #dedede;border-radius:2.5px;"></div>
<div style="left:194px;top:766px;width:12px;height:12px;background:#4c7285;border-radius:50%;"></div>
<div style="left:220px;top:759px;width:28px;height:28px;background:#1c2531;box-sizing:border-box;border:1px solid #3a4961;border-radius:4px;"></div>
<svg style="left:223px;top:761.5px;" width="22" height="22" viewBox="0 0 24 24"><path fill="#b39ddb" d="M22 6.92l-1.41-1.41-2.85 3.21C15.68 6.4 12.83 5 9.61 5 6.72 5 4.07 6.16 2 8l1.42 1.42C5.12 7.93 7.27 7 9.61 7c2.74 0 5.09 1.26 6.77 3.24l-2.88 3.24-4-4L2 16.99l1.5 1.5 6-6.01 4 4 4.05-4.55c.75 1.35 1.25 2.9 1.44 4.55H21c-.22-2.3-.95-4.39-2.04-6.14L22 6.92z"/></svg>
<div style="left:255.0px;top:764.0px;width:18px;height:18px;background:#1c2531;border-radius:50%;box-sizing:border-box;border:1px solid #3a4961;"></div>
<svg style="left:251.5px;top:761px;" width="25" height="25" viewBox="0 0 24 24"><path fill="#fff" d="M7 10l5 5 5-5z"/></svg>
<svg style="left:642px;top:760px" width="22" height="22" viewBox="0 0 22 22"><circle cx="11" cy="11" r="8.3" fill="none" stroke="#fff" stroke-width="1.8"/><path d="M8.6 6.9V15.1L15 11Z" fill="none" stroke="#d4d6da" stroke-width="1.05" stroke-linejoin="round"/></svg>
<div style="left:896px;top:754px;width:90px;height:36px;background:#456326;"></div>
<div style="left:896px;top:790px;width:90px;height:2px;background:#8bc34a;"></div>
<div style="left:973.6px;top:756.1px;width:7.7px;height:7.7px;background:#8bc34a;border-radius:50%;"></div>
<div style="left:1150px;top:759px;width:28px;height:28px;background:#1c2531;box-sizing:border-box;border:1px solid #3a4961;border-radius:4px;"></div>
<svg style="left:1152px;top:761px;" width="23" height="23" viewBox="0 0 24 24"><path fill="#fff" d="M12 4l-1.41 1.41L16.17 11H4v2h12.17l-5.58 5.59L12 20l8-8z"/></svg>
<div style="left:1190px;top:754px;width:47px;height:19px;background:#232b3a;"></div>
<div style="left:1190px;top:773px;width:47px;height:19px;background:#2b3043;"></div>
<div style="left:1239px;top:754px;width:66px;height:19px;background:#2b3043;"></div>
<div style="left:1239px;top:773px;width:66px;height:19px;background:#2b3043;"></div>
<div style="left:1239px;top:773px;width:66px;height:17px;background:#7f561e;"></div>
<div style="left:1239px;top:790px;width:66px;height:2px;background:#fdae3c;"></div>
<div style="left:1307px;top:754px;width:68px;height:19px;background:#232b3a;"></div>
<div style="left:1307px;top:773px;width:68px;height:19px;background:#2b3043;"></div>
<div style="left:1307px;top:773px;width:68px;height:17px;background:#7f561e;"></div>
<div style="left:1307px;top:790px;width:68px;height:2px;background:#fdae3c;"></div>
<div style="left:1377px;top:754px;width:68px;height:19px;background:#232b3a;"></div>
<div style="left:1377px;top:773px;width:68px;height:19px;background:#2b3043;"></div>
<div style="left:1377px;top:773px;width:68px;height:17px;background:#7f561e;"></div>
<div style="left:1377px;top:790px;width:68px;height:2px;background:#fdae3c;"></div>
<div style="left:1447px;top:754px;width:68px;height:19px;background:#232b3a;"></div>
<div style="left:1447px;top:773px;width:68px;height:19px;background:#2b3043;"></div>
<div style="left:1447px;top:773px;width:68px;height:17px;background:#7f561e;"></div>
<div style="left:1447px;top:790px;width:68px;height:2px;background:#fdae3c;"></div>
<div style="left:1517px;top:754px;width:68px;height:19px;background:#232b3a;"></div>
<div style="left:1517px;top:773px;width:68px;height:19px;background:#2b3043;"></div>
<div style="left:1517px;top:773px;width:68px;height:17px;background:#456326;"></div>
<div style="left:1517px;top:790px;width:68px;height:2px;background:#8bc34a;"></div>
<div style="left:1587px;top:754px;width:68px;height:19px;background:#232b3a;"></div>
<div style="left:1587px;top:773px;width:68px;height:19px;background:#2b3043;"></div>
<div style="left:1587px;top:773px;width:68px;height:17px;background:#456326;"></div>
<div style="left:1587px;top:790px;width:68px;height:2px;background:#8bc34a;"></div>
<div style="left:1657px;top:754px;width:68px;height:19px;background:#232b3a;"></div>
<div style="left:1657px;top:773px;width:68px;height:19px;background:#2b3043;"></div>
<div style="left:1657px;top:773px;width:68px;height:17px;background:#456326;"></div>
<div style="left:1657px;top:790px;width:68px;height:2px;background:#8bc34a;"></div>
<div style="left:1727px;top:754px;width:68px;height:19px;background:#232b3a;"></div>
<div style="left:1727px;top:773px;width:68px;height:19px;background:#2b3043;"></div>
<div style="left:1797px;top:754px;width:68px;height:19px;background:#232b3a;"></div>
<div style="left:1797px;top:773px;width:68px;height:19px;background:#2b3043;"></div>
<div style="left:1867px;top:754px;width:4px;height:19px;background:#232b3a;"></div>
<div style="left:1867px;top:773px;width:4px;height:19px;background:#2b3043;"></div>
<div style="left:54px;top:794px;width:32px;height:38px;background:#232b3a;"></div>
<div style="left:88px;top:794px;width:579px;height:38px;background:#232b3a;"></div>
<div style="left:669px;top:794px;width:225px;height:38px;background:#232b3a;"></div>
<div style="left:896px;top:794px;width:90px;height:38px;background:#232b3a;"></div>
<div style="left:988px;top:794px;width:148px;height:38px;background:#232b3a;"></div>
<div style="left:1138px;top:794px;width:45px;height:38px;background:#232b3a;"></div>
<div style="left:63px;top:806px;width:14px;height:14px;box-sizing:border-box;border:2px solid #dedede;border-radius:2.5px;"></div>
<div style="left:140px;top:801px;width:24px;height:24px;background:#4c7285;border-radius:50%;"></div>
<svg style="left:140px;top:801px" width="24" height="24" viewBox="0 0 24 24"><path d="M9.6 6.3 L15.2 12 L9.6 17.7" fill="none" stroke="#fff" stroke-width="2.1"/></svg>
<div style="left:172px;top:799px;width:28px;height:28px;background:#1c2531;box-sizing:border-box;border:1px solid #3a4961;border-radius:4px;"></div>
<svg style="left:172px;top:799px" width="28" height="28" viewBox="0 0 28 28"><g fill="none" stroke="#f08080"><circle cx="14" cy="14" r="9.5" stroke-width="1.8"/><circle cx="14" cy="14" r="5.6" stroke-width="1.8"/><circle cx="14" cy="14" r="2.1" stroke-width="1.6"/></g></svg>
<div style="left:207.0px;top:804.0px;width:18px;height:18px;background:#1c2531;border-radius:50%;box-sizing:border-box;border:1px solid #3a4961;"></div>
<svg style="left:203.5px;top:801px;" width="25" height="25" viewBox="0 0 24 24"><path fill="#fff" d="M7 10l5 5 5-5z"/></svg>
<svg style="left:642px;top:800px" width="22" height="22" viewBox="0 0 22 22"><circle cx="11" cy="11" r="8.3" fill="none" stroke="#fff" stroke-width="1.8"/><path d="M8.6 6.9V15.1L15 11Z" fill="none" stroke="#d4d6da" stroke-width="1.05" stroke-linejoin="round"/></svg>
<div style="left:896px;top:794px;width:90px;height:36px;background:#4e5461;"></div>
<div style="left:976px;top:798.5px;width:3px;height:4px;box-sizing:border-box;border:.8px solid #c9ccd2;border-radius:50%;"></div>
<div style="left:1190px;top:794px;width:47px;height:19px;background:#232b3a;"></div>
<div style="left:1190px;top:813px;width:47px;height:19px;background:#2b3043;"></div>
<div style="left:1239px;top:794px;width:66px;height:19px;background:#2b3043;"></div>
<div style="left:1239px;top:813px;width:66px;height:19px;background:#2b3043;"></div>
<div style="left:1307px;top:794px;width:68px;height:19px;background:#232b3a;"></div>
<div style="left:1307px;top:813px;width:68px;height:19px;background:#2b3043;"></div>
<div style="left:1377px;top:794px;width:68px;height:19px;background:#232b3a;"></div>
<div style="left:1377px;top:813px;width:68px;height:19px;background:#2b3043;"></div>
<div style="left:1447px;top:794px;width:68px;height:19px;background:#232b3a;"></div>
<div style="left:1447px;top:813px;width:68px;height:19px;background:#2b3043;"></div>
<div style="left:1517px;top:794px;width:68px;height:19px;background:#232b3a;"></div>
<div style="left:1517px;top:813px;width:68px;height:19px;background:#2b3043;"></div>
<div style="left:1587px;top:794px;width:68px;height:19px;background:#232b3a;"></div>
<div style="left:1587px;top:813px;width:68px;height:19px;background:#2b3043;"></div>
<div style="left:1657px;top:794px;width:68px;height:19px;background:#232b3a;"></div>
<div style="left:1657px;top:813px;width:68px;height:19px;background:#2b3043;"></div>
<div style="left:1727px;top:794px;width:68px;height:19px;background:#232b3a;"></div>
<div style="left:1727px;top:813px;width:68px;height:19px;background:#2b3043;"></div>
<div style="left:1797px;top:794px;width:68px;height:19px;background:#232b3a;"></div>
<div style="left:1797px;top:813px;width:68px;height:19px;background:#2b3043;"></div>
<div style="left:1867px;top:794px;width:4px;height:19px;background:#232b3a;"></div>
<div style="left:1867px;top:813px;width:4px;height:19px;background:#2b3043;"></div>
<div style="left:54px;top:834px;width:32px;height:38px;background:#2b3043;"></div>
<div style="left:88px;top:834px;width:579px;height:38px;background:#2b3043;"></div>
<div style="left:669px;top:834px;width:225px;height:38px;background:#2b3043;"></div>
<div style="left:896px;top:834px;width:90px;height:38px;background:#2b3043;"></div>
<div style="left:988px;top:834px;width:148px;height:38px;background:#2b3043;"></div>
<div style="left:1138px;top:834px;width:45px;height:38px;background:#2b3043;"></div>
<div style="left:63px;top:846px;width:14px;height:14px;box-sizing:border-box;border:2px solid #dedede;border-radius:2.5px;"></div>
<div style="left:140px;top:841px;width:24px;height:24px;background:#4c7285;border-radius:50%;"></div>
<svg style="left:140px;top:841px" width="24" height="24" viewBox="0 0 24 24"><path d="M9.6 6.3 L15.2 12 L9.6 17.7" fill="none" stroke="#fff" stroke-width="2.1"/></svg>
<div style="left:172px;top:839px;width:28px;height:28px;background:#1c2531;box-sizing:border-box;border:1px solid #3a4961;border-radius:4px;"></div>
<svg style="left:172px;top:839px" width="28" height="28" viewBox="0 0 28 28"><g fill="none" stroke="#f08080"><circle cx="14" cy="14" r="9.5" stroke-width="1.8"/><circle cx="14" cy="14" r="5.6" stroke-width="1.8"/><circle cx="14" cy="14" r="2.1" stroke-width="1.6"/></g></svg>
<div style="left:207.0px;top:844.0px;width:18px;height:18px;background:#1c2531;border-radius:50%;box-sizing:border-box;border:1px solid #3a4961;"></div>
<svg style="left:203.5px;top:841px;" width="25" height="25" viewBox="0 0 24 24"><path fill="#fff" d="M7 10l5 5 5-5z"/></svg>
<svg style="left:642px;top:840px" width="22" height="22" viewBox="0 0 22 22"><circle cx="11" cy="11" r="8.3" fill="none" stroke="#fff" stroke-width="1.8"/><path d="M8.6 6.9V15.1L15 11Z" fill="none" stroke="#d4d6da" stroke-width="1.05" stroke-linejoin="round"/></svg>
<div style="left:896px;top:834px;width:90px;height:36px;background:#456326;"></div>
<div style="left:896px;top:870px;width:90px;height:2px;background:#8bc34a;"></div>
<div style="left:973.6px;top:836.1px;width:7.7px;height:7.7px;background:#8bc34a;border-radius:50%;"></div>
<div style="left:1190px;top:834px;width:47px;height:19px;background:#232b3a;"></div>
<div style="left:1190px;top:853px;width:47px;height:19px;background:#2b3043;"></div>
<div style="left:1239px;top:834px;width:66px;height:19px;background:#2b3043;"></div>
<div style="left:1239px;top:853px;width:66px;height:19px;background:#2b3043;"></div>
<div style="left:1239px;top:853px;width:66px;height:17px;background:#456326;"></div>
<div style="left:1239px;top:870px;width:66px;height:2px;background:#8bc34a;"></div>
<div style="left:1307px;top:834px;width:68px;height:19px;background:#232b3a;"></div>
<div style="left:1307px;top:853px;width:68px;height:19px;background:#2b3043;"></div>
<div style="left:1307px;top:853px;width:68px;height:17px;background:#7d211d;"></div>
<div style="left:1307px;top:870px;width:68px;height:2px;background:#f44336;"></div>
<div style="left:1377px;top:834px;width:68px;height:19px;background:#232b3a;"></div>
<div style="left:1377px;top:853px;width:68px;height:19px;background:#2b3043;"></div>
<div style="left:1377px;top:853px;width:68px;height:17px;background:#7f561e;"></div>
<div style="left:1377px;top:870px;width:68px;height:2px;background:#fdae3c;"></div>
<div style="left:1447px;top:834px;width:68px;height:19px;background:#232b3a;"></div>
<div style="left:1447px;top:853px;width:68px;height:19px;background:#2b3043;"></div>
<div style="left:1447px;top:853px;width:68px;height:17px;background:#456326;"></div>
<div style="left:1447px;top:870px;width:68px;height:2px;background:#8bc34a;"></div>
<div style="left:1517px;top:834px;width:68px;height:19px;background:#232b3a;"></div>
<div style="left:1517px;top:853px;width:68px;height:19px;background:#2b3043;"></div>
<div style="left:1517px;top:853px;width:68px;height:17px;background:#456326;"></div>
<div style="left:1517px;top:870px;width:68px;height:2px;background:#8bc34a;"></div>
<div style="left:1587px;top:834px;width:68px;height:19px;background:#232b3a;"></div>
<div style="left:1587px;top:853px;width:68px;height:19px;background:#2b3043;"></div>
<div style="left:1587px;top:853px;width:68px;height:17px;background:#456326;"></div>
<div style="left:1587px;top:870px;width:68px;height:2px;background:#8bc34a;"></div>
<div style="left:1657px;top:834px;width:68px;height:19px;background:#232b3a;"></div>
<div style="left:1657px;top:853px;width:68px;height:19px;background:#2b3043;"></div>
<div style="left:1727px;top:834px;width:68px;height:19px;background:#232b3a;"></div>
<div style="left:1727px;top:853px;width:68px;height:19px;background:#2b3043;"></div>
<div style="left:1797px;top:834px;width:68px;height:19px;background:#232b3a;"></div>
<div style="left:1797px;top:853px;width:68px;height:19px;background:#2b3043;"></div>
<div style="left:1867px;top:834px;width:4px;height:19px;background:#232b3a;"></div>
<div style="left:1867px;top:853px;width:4px;height:19px;background:#2b3043;"></div>
<div style="left:54px;top:874px;width:32px;height:38px;background:#232b3a;"></div>
<div style="left:88px;top:874px;width:579px;height:38px;background:#232b3a;"></div>
<div style="left:669px;top:874px;width:225px;height:38px;background:#232b3a;"></div>
<div style="left:896px;top:874px;width:90px;height:38px;background:#232b3a;"></div>
<div style="left:988px;top:874px;width:148px;height:38px;background:#232b3a;"></div>
<div style="left:1138px;top:874px;width:45px;height:38px;background:#232b3a;"></div>
<div style="left:63px;top:886px;width:14px;height:14px;box-sizing:border-box;border:2px solid #dedede;border-radius:2.5px;"></div>
<div style="left:140px;top:881px;width:24px;height:24px;background:#4c7285;border-radius:50%;"></div>
<svg style="left:140px;top:881px" width="24" height="24" viewBox="0 0 24 24"><path d="M9.6 6.3 L15.2 12 L9.6 17.7" fill="none" stroke="#fff" stroke-width="2.1"/></svg>
<div style="left:172px;top:879px;width:28px;height:28px;background:#1c2531;box-sizing:border-box;border:1px solid #3a4961;border-radius:4px;"></div>
<svg style="left:172px;top:879px" width="28" height="28" viewBox="0 0 28 28"><g fill="none" stroke="#f08080"><circle cx="14" cy="14" r="9.5" stroke-width="1.8"/><circle cx="14" cy="14" r="5.6" stroke-width="1.8"/><circle cx="14" cy="14" r="2.1" stroke-width="1.6"/></g></svg>
<div style="left:207.0px;top:884.0px;width:18px;height:18px;background:#1c2531;border-radius:50%;box-sizing:border-box;border:1px solid #3a4961;"></div>
<svg style="left:203.5px;top:881px;" width="25" height="25" viewBox="0 0 24 24"><path fill="#fff" d="M7 10l5 5 5-5z"/></svg>
<svg style="left:642px;top:880px" width="22" height="22" viewBox="0 0 22 22"><circle cx="11" cy="11" r="8.3" fill="none" stroke="#fff" stroke-width="1.8"/><path d="M8.6 6.9V15.1L15 11Z" fill="none" stroke="#d4d6da" stroke-width="1.05" stroke-linejoin="round"/></svg>
<div style="left:896px;top:874px;width:90px;height:36px;background:#7f561e;"></div>
<div style="left:896px;top:910px;width:90px;height:2px;background:#fdae3c;"></div>
<svg style="left:972.2px;top:875px" width="10" height="9" viewBox="0 0 10 9"><path d="M5 .6 L9.4 8.6 H.6 Z" fill="#f9a435"/></svg>
<div style="left:1190px;top:874px;width:47px;height:19px;background:#232b3a;"></div>
<div style="left:1190px;top:893px;width:47px;height:19px;background:#2b3043;"></div>
<div style="left:1239px;top:874px;width:66px;height:19px;background:#2b3043;"></div>
<div style="left:1239px;top:893px;width:66px;height:19px;background:#2b3043;"></div>
<div style="left:1239px;top:893px;width:66px;height:17px;background:#7d211d;"></div>
<div style="left:1239px;top:910px;width:66px;height:2px;background:#f44336;"></div>
<div style="left:1307px;top:874px;width:68px;height:19px;background:#232b3a;"></div>
<div style="left:1307px;top:893px;width:68px;height:19px;background:#2b3043;"></div>
<div style="left:1307px;top:893px;width:68px;height:17px;background:#7d211d;"></div>
<div style="left:1307px;top:910px;width:68px;height:2px;background:#f44336;"></div>
<div style="left:1377px;top:874px;width:68px;height:19px;background:#232b3a;"></div>
<div style="left:1377px;top:893px;width:68px;height:19px;background:#2b3043;"></div>
<div style="left:1377px;top:893px;width:68px;height:17px;background:#7d211d;"></div>
<div style="left:1377px;top:910px;width:68px;height:2px;background:#f44336;"></div>
<div style="left:1447px;top:874px;width:68px;height:19px;background:#232b3a;"></div>
<div style="left:1447px;top:893px;width:68px;height:19px;background:#2b3043;"></div>
<div style="left:1447px;top:893px;width:68px;height:17px;background:#7f561e;"></div>
<div style="left:1447px;top:910px;width:68px;height:2px;background:#fdae3c;"></div>
<div style="left:1517px;top:874px;width:68px;height:19px;background:#232b3a;"></div>
<div style="left:1517px;top:893px;width:68px;height:19px;background:#2b3043;"></div>
<div style="left:1517px;top:893px;width:68px;height:17px;background:#7f561e;"></div>
<div style="left:1517px;top:910px;width:68px;height:2px;background:#fdae3c;"></div>
<div style="left:1587px;top:874px;width:68px;height:19px;background:#232b3a;"></div>
<div style="left:1587px;top:893px;width:68px;height:19px;background:#2b3043;"></div>
<div style="left:1657px;top:874px;width:68px;height:19px;background:#232b3a;"></div>
<div style="left:1657px;top:893px;width:68px;height:19px;background:#2b3043;"></div>
<div style="left:1727px;top:874px;width:68px;height:19px;background:#232b3a;"></div>
<div style="left:1727px;top:893px;width:68px;height:19px;background:#2b3043;"></div>
<div style="left:1797px;top:874px;width:68px;height:19px;background:#232b3a;"></div>
<div style="left:1797px;top:893px;width:68px;height:19px;background:#2b3043;"></div>
<div style="left:1867px;top:874px;width:4px;height:19px;background:#232b3a;"></div>
<div style="left:1867px;top:893px;width:4px;height:19px;background:#2b3043;"></div>
<div style="left:104px;top:225px;width:1px;height:348px;background:#455671;"></div>
<div style="left:128px;top:265px;width:1px;height:148px;background:#455671;"></div>
<div style="left:128px;top:585px;width:1px;height:325px;background:#455671;"></div>
<div style="left:152px;top:665px;width:1px;height:68px;background:#455671;"></div>
<div style="left:176px;top:745px;width:1px;height:28px;background:#455671;"></div>
<div style="left:104px;top:253px;width:12px;height:1px;background:#455671;"></div>
<div style="left:128px;top:293px;width:18px;height:1px;background:#455671;"></div>
<div style="left:128px;top:333px;width:12px;height:1px;background:#455671;"></div>
<div style="left:128px;top:373px;width:12px;height:1px;background:#455671;"></div>
<div style="left:128px;top:413px;width:12px;height:1px;background:#455671;"></div>
<div style="left:104px;top:453px;width:12px;height:1px;background:#455671;"></div>
<div style="left:104px;top:493px;width:12px;height:1px;background:#455671;"></div>
<div style="left:104px;top:533px;width:12px;height:1px;background:#455671;"></div>
<div style="left:104px;top:573px;width:12px;height:1px;background:#455671;"></div>
<div style="left:128px;top:613px;width:18px;height:1px;background:#455671;"></div>
<div style="left:128px;top:653px;width:12px;height:1px;background:#455671;"></div>
<div style="left:152px;top:693px;width:12px;height:1px;background:#455671;"></div>
<div style="left:152px;top:733px;width:12px;height:1px;background:#455671;"></div>
<div style="left:176px;top:773px;width:18px;height:1px;background:#455671;"></div>
<div style="left:128px;top:813px;width:12px;height:1px;background:#455671;"></div>
<div style="left:128px;top:853px;width:12px;height:1px;background:#455671;"></div>
<div style="left:128px;top:893px;width:12px;height:1px;background:#455671;"></div>
<span class="t" style="left:185.60px;top:203.00px;font-size:12.5px;letter-spacing:0.057px;">Provide the the very best sustainable products across our markets!</span>
<span class="t" style="left:673.20px;top:204.00px;font-size:12.5px;letter-spacing:-0.186px;">DemoCo</span>
<span class="t" style="left:917.55px;top:202.50px;font-size:12.4px;letter-spacing:-1.071px;">YELLOW</span>
<span class="t" style="left:992.10px;top:204.00px;font-size:12.5px;letter-spacing:-0.126px;">Executive Leader</span>
<span class="t" style="left:209.00px;top:243.00px;font-size:12.5px;letter-spacing:-0.075px;">Achieve Delivered Quality to 3.4 DPMO by 2023</span>
<span class="t" style="left:673.20px;top:244.00px;font-size:12.5px;letter-spacing:0.013px;">Global Manufacturing &amp; Supply Chain</span>
<span class="t" style="left:921.95px;top:242.50px;font-size:12.4px;letter-spacing:-1.495px;">GREEN</span>
<span class="t" style="left:992.10px;top:244.00px;font-size:12.5px;letter-spacing:0.081px;">Chief Operation Officer</span>
<span class="t" style="left:233.30px;top:283.00px;font-size:12.5px;letter-spacing:0.025px;">Defects Per Million Opportunities (DPMO)</span>
<span class="t" style="left:673.20px;top:284.00px;font-size:12.5px;letter-spacing:-0.186px;">DemoCo</span>
<span class="t" style="left:921.95px;top:282.50px;font-size:12.4px;letter-spacing:-1.495px;">GREEN</span>
<span class="t" style="left:992.10px;top:284.00px;font-size:12.5px;letter-spacing:-0.126px;">Executive Leader</span>
<span class="t" style="left:1256.36px;top:292.00px;font-size:12.5px;font-weight:700;">14.41</span>
<span class="t" style="left:1328.83px;top:292.00px;font-size:12.5px;">4.87</span>
<span class="t" style="left:1398.83px;top:292.00px;font-size:12.5px;">5.00</span>
<span class="t" style="left:1468.83px;top:292.00px;font-size:12.5px;">5.05</span>
<span class="t" style="left:1538.83px;top:292.00px;font-size:12.5px;">5.10</span>
<span class="t" style="left:1608.83px;top:292.00px;font-size:12.5px;">5.08</span>
<span class="t" style="left:1748.83px;top:292.00px;font-size:12.5px;">5.00</span>
<span class="t" style="left:1818.83px;top:292.00px;font-size:12.5px;">4.00</span>
<span class="t" style="left:1195.50px;top:273.50px;font-size:10.3px;letter-spacing:-1.200px;">TARGET</span>
<span class="t" style="left:1195.50px;top:292.50px;font-size:10.3px;letter-spacing:-1.065px;">ACTUAL</span>
<span class="t" style="left:1259.83px;top:273.00px;font-size:12.5px;font-weight:700;">5.00</span>
<span class="t" style="left:1328.83px;top:273.00px;font-size:12.5px;">5.00</span>
<span class="t" style="left:1398.83px;top:273.00px;font-size:12.5px;">5.00</span>
<span class="t" style="left:1468.83px;top:273.00px;font-size:12.5px;">5.00</span>
<span class="t" style="left:1538.83px;top:273.00px;font-size:12.5px;">5.00</span>
<span class="t" style="left:1608.83px;top:273.00px;font-size:12.5px;">5.00</span>
<span class="t" style="left:1748.83px;top:273.00px;font-size:12.5px;">5.00</span>
<span class="t" style="left:1818.83px;top:273.00px;font-size:12.5px;">5.00</span>
<span class="t" style="left:233.30px;top:323.00px;font-size:12.5px;letter-spacing:0.024px;">Develop Manufacturing Excellence culture</span>
<span class="t" style="left:673.20px;top:324.00px;font-size:12.5px;letter-spacing:-0.052px;">Global Operational Excellence</span>
<span class="t" style="left:921.95px;top:322.50px;font-size:12.4px;letter-spacing:-1.495px;">GREEN</span>
<span class="t" style="left:992.10px;top:324.00px;font-size:12.5px;letter-spacing:0.056px;">Chief Transformation ...</span>
<span class="t" style="left:1195.50px;top:313.50px;font-size:10.3px;letter-spacing:-1.200px;">TARGET</span>
<span class="t" style="left:1195.50px;top:332.50px;font-size:10.3px;letter-spacing:-1.065px;">ACTUAL</span>
<span class="t" style="left:233.30px;top:363.00px;font-size:12.5px;">Improve Delivered Quality from x to 3.85 DPMO by 2021</span>
<span class="t" style="left:673.20px;top:364.00px;font-size:12.5px;letter-spacing:-0.112px;">Beverages Operational Excellence</span>
<span class="t" style="left:921.95px;top:362.50px;font-size:12.4px;letter-spacing:-1.495px;">GREEN</span>
<span class="t" style="left:992.10px;top:364.00px;font-size:12.5px;letter-spacing:0.056px;">Chief Transformation ...</span>
<span class="t" style="left:1195.50px;top:353.50px;font-size:10.3px;letter-spacing:-1.200px;">TARGET</span>
<span class="t" style="left:1195.50px;top:372.50px;font-size:10.3px;letter-spacing:-1.065px;">ACTUAL</span>
<span class="t" style="left:233.30px;top:403.00px;font-size:12.5px;">Improve Delivered Quality from x to 3.85 DPMO by 2021</span>
<span class="t" style="left:673.20px;top:404.00px;font-size:12.5px;letter-spacing:-0.172px;">Chocolate OpEx</span>
<span class="t" style="left:917.55px;top:402.50px;font-size:12.4px;letter-spacing:-1.071px;">YELLOW</span>
<span class="t" style="left:992.10px;top:404.00px;font-size:12.5px;letter-spacing:0.056px;">Chief Transformation ...</span>
<span class="t" style="left:1195.50px;top:393.50px;font-size:10.3px;letter-spacing:-1.200px;">TARGET</span>
<span class="t" style="left:1195.50px;top:412.50px;font-size:10.3px;letter-spacing:-1.065px;">ACTUAL</span>
<span class="t" style="left:209.00px;top:443.00px;font-size:12.5px;letter-spacing:0.022px;">Carbon Neutral by 2025</span>
<span class="t" style="left:673.20px;top:444.00px;font-size:12.5px;letter-spacing:0.013px;">Global Manufacturing &amp; Supply Chain</span>
<span class="t" style="left:921.95px;top:442.50px;font-size:12.4px;letter-spacing:-1.495px;">GREEN</span>
<span class="t" style="left:992.10px;top:444.00px;font-size:12.5px;letter-spacing:0.081px;">Chief Operation Officer</span>
<span class="t" style="left:209.00px;top:483.00px;font-size:12.5px;letter-spacing:0.033px;">Establish a True Innovation Culture</span>
<span class="t" style="left:673.20px;top:484.00px;font-size:12.5px;letter-spacing:0.022px;">Global Innovation / R&amp;D</span>
<span class="t" style="left:921.95px;top:482.50px;font-size:12.4px;letter-spacing:-1.495px;">GREEN</span>
<span class="t" style="left:992.10px;top:484.00px;font-size:12.5px;letter-spacing:-0.231px;">PMO Leader</span>
<span class="t" style="left:209.00px;top:523.00px;font-size:12.5px;letter-spacing:0.026px;">Improve Group Revenue to $500m by 2023, whilst maintaining 15% Margin</span>
<span class="t" style="left:673.20px;top:524.00px;font-size:12.5px;letter-spacing:-0.063px;">Global Sales &amp; Marketing</span>
<span class="t" style="left:917.55px;top:522.50px;font-size:12.4px;letter-spacing:-1.071px;">YELLOW</span>
<span class="t" style="left:992.10px;top:524.00px;font-size:12.5px;letter-spacing:-0.108px;">Chief Revenue Officer</span>
<span class="t" style="left:209.00px;top:563.00px;font-size:12.5px;letter-spacing:0.036px;">Our Customers are at the Heart of Everything we do</span>
<span class="t" style="left:673.20px;top:564.00px;font-size:12.5px;letter-spacing:0.013px;">Global Manufacturing &amp; Supply Chain</span>
<span class="t" style="left:921.95px;top:562.50px;font-size:12.4px;letter-spacing:-1.495px;">GREEN</span>
<span class="t" style="left:992.10px;top:564.00px;font-size:12.5px;letter-spacing:0.081px;">Chief Operation Officer</span>
<span class="t" style="left:233.30px;top:603.00px;font-size:12.5px;letter-spacing:-0.054px;">Customer Satisfaction Score</span>
<span class="t" style="left:673.20px;top:604.00px;font-size:12.5px;letter-spacing:-0.186px;">DemoCo</span>
<span class="t" style="left:921.95px;top:602.50px;font-size:12.4px;letter-spacing:-1.495px;">GREEN</span>
<span class="t" style="left:992.10px;top:604.00px;font-size:12.5px;letter-spacing:-0.126px;">Executive Leader</span>
<span class="t" style="left:1256.36px;top:612.00px;font-size:12.5px;font-weight:700;">80.00</span>
<span class="t" style="left:1325.36px;top:612.00px;font-size:12.5px;">80.00</span>
<span class="t" style="left:1395.36px;top:612.00px;font-size:12.5px;">80.00</span>
<span class="t" style="left:1465.36px;top:612.00px;font-size:12.5px;">80.00</span>
<span class="t" style="left:1535.36px;top:612.00px;font-size:12.5px;">80.00</span>
<span class="t" style="left:1195.50px;top:593.50px;font-size:10.3px;letter-spacing:-1.200px;">TARGET</span>
<span class="t" style="left:1195.50px;top:612.50px;font-size:10.3px;letter-spacing:-1.065px;">ACTUAL</span>
<span class="t" style="left:1256.36px;top:593.00px;font-size:12.5px;font-weight:700;">80.00</span>
<span class="t" style="left:1325.36px;top:593.00px;font-size:12.5px;">80.00</span>
<span class="t" style="left:1395.36px;top:593.00px;font-size:12.5px;">80.00</span>
<span class="t" style="left:1465.36px;top:593.00px;font-size:12.5px;">80.00</span>
<span class="t" style="left:1535.36px;top:593.00px;font-size:12.5px;">80.00</span>
<span class="t" style="left:233.30px;top:643.00px;font-size:12.5px;letter-spacing:-0.148px;">Group On-Time Delivery (DIFOT) to 99% by 2023</span>
<span class="t" style="left:673.20px;top:644.00px;font-size:12.5px;letter-spacing:-0.186px;">DemoCo</span>
<span class="t" style="left:921.95px;top:642.50px;font-size:12.4px;letter-spacing:-1.495px;">GREEN</span>
<span class="t" style="left:992.10px;top:644.00px;font-size:12.5px;letter-spacing:-0.126px;">Executive Leader</span>
<span class="t" style="left:1256.36px;top:652.00px;font-size:12.5px;font-weight:700;">96.67</span>
<span class="t" style="left:1325.36px;top:652.00px;font-size:12.5px;">95.00</span>
<span class="t" style="left:1395.36px;top:652.00px;font-size:12.5px;">95.00</span>
<span class="t" style="left:1465.36px;top:652.00px;font-size:12.5px;">95.00</span>
<span class="t" style="left:1535.36px;top:652.00px;font-size:12.5px;">95.00</span>
<span class="t" style="left:1195.50px;top:633.50px;font-size:10.3px;letter-spacing:-1.200px;">TARGET</span>
<span class="t" style="left:1195.50px;top:652.50px;font-size:10.3px;letter-spacing:-1.065px;">ACTUAL</span>
<span class="t" style="left:1256.36px;top:633.00px;font-size:12.5px;font-weight:700;">95.00</span>
<span class="t" style="left:1325.36px;top:633.00px;font-size:12.5px;">95.00</span>
<span class="t" style="left:1395.36px;top:633.00px;font-size:12.5px;">95.00</span>
<span class="t" style="left:1465.36px;top:633.00px;font-size:12.5px;">95.00</span>
<span class="t" style="left:1535.36px;top:633.00px;font-size:12.5px;">95.00</span>
<span class="t" style="left:257.20px;top:683.00px;font-size:12.5px;letter-spacing:-0.217px;">SC On-Time Delivery</span>
<span class="t" style="left:673.20px;top:684.00px;font-size:12.5px;letter-spacing:-0.058px;">Corporate Supply Chain</span>
<span class="t" style="left:921.95px;top:682.50px;font-size:12.4px;letter-spacing:-1.495px;">GREEN</span>
<span class="t" style="left:992.10px;top:684.00px;font-size:12.5px;letter-spacing:-0.010px;">Supply Chain Director</span>
<span class="t" style="left:1256.36px;top:692.00px;font-size:12.5px;font-weight:700;">95.00</span>
<span class="t" style="left:1325.36px;top:692.00px;font-size:12.5px;">95.00</span>
<span class="t" style="left:1395.36px;top:692.00px;font-size:12.5px;">95.00</span>
<span class="t" style="left:1465.36px;top:692.00px;font-size:12.5px;">95.00</span>
<span class="t" style="left:1535.36px;top:692.00px;font-size:12.5px;">95.00</span>
<span class="t" style="left:1605.36px;top:692.00px;font-size:12.5px;">95.00</span>
<span class="t" style="left:1195.50px;top:673.50px;font-size:10.3px;letter-spacing:-1.200px;">TARGET</span>
<span class="t" style="left:1195.50px;top:692.50px;font-size:10.3px;letter-spacing:-1.065px;">ACTUAL</span>
<span class="t" style="left:1256.36px;top:673.00px;font-size:12.5px;font-weight:700;">95.00</span>
<span class="t" style="left:1325.36px;top:673.00px;font-size:12.5px;">95.00</span>
<span class="t" style="left:1395.36px;top:673.00px;font-size:12.5px;">95.00</span>
<span class="t" style="left:1465.36px;top:673.00px;font-size:12.5px;">95.00</span>
<span class="t" style="left:1535.36px;top:673.00px;font-size:12.5px;">95.00</span>
<span class="t" style="left:1605.36px;top:673.00px;font-size:12.5px;">95.00</span>
<span class="t" style="left:257.20px;top:723.00px;font-size:12.5px;letter-spacing:0.141px;">New Corporate Transformation Programme</span>
<span class="t" style="left:673.20px;top:724.00px;font-size:12.5px;letter-spacing:-0.186px;">DemoCo</span>
<span class="t" style="left:930.45px;top:722.50px;font-size:12px;letter-spacing:0.742px;">N/A</span>
<span class="t" style="left:992.10px;top:724.00px;font-size:12.5px;letter-spacing:0.057px;">VP Manufacturing</span>
<span class="t" style="left:1195.50px;top:713.50px;font-size:10.3px;letter-spacing:-1.200px;">TARGET</span>
<span class="t" style="left:1195.50px;top:732.50px;font-size:10.3px;letter-spacing:-1.065px;">ACTUAL</span>
<span class="t" style="left:281.00px;top:763.00px;font-size:12.5px;letter-spacing:0.103px;">Operating Income</span>
<span class="t" style="left:673.20px;top:764.00px;font-size:12.5px;letter-spacing:-0.186px;">DemoCo</span>
<span class="t" style="left:921.95px;top:762.50px;font-size:12.4px;letter-spacing:-1.495px;">GREEN</span>
<span class="t" style="left:992.10px;top:764.00px;font-size:12.5px;letter-spacing:-0.126px;">Executive Leader</span>
<span class="t" style="left:1259.83px;top:772.00px;font-size:12.5px;font-weight:700;">4.93</span>
<span class="t" style="left:1328.83px;top:772.00px;font-size:12.5px;">4.90</span>
<span class="t" style="left:1398.83px;top:772.00px;font-size:12.5px;">4.85</span>
<span class="t" style="left:1468.83px;top:772.00px;font-size:12.5px;">4.83</span>
<span class="t" style="left:1538.83px;top:772.00px;font-size:12.5px;">5.00</span>
<span class="t" style="left:1608.83px;top:772.00px;font-size:12.5px;">5.00</span>
<span class="t" style="left:1678.83px;top:772.00px;font-size:12.5px;">5.00</span>
<span class="t" style="left:1195.50px;top:753.50px;font-size:10.3px;letter-spacing:-1.200px;">TARGET</span>
<span class="t" style="left:1195.50px;top:772.50px;font-size:10.3px;letter-spacing:-1.065px;">ACTUAL</span>
<span class="t" style="left:1259.83px;top:753.00px;font-size:12.5px;font-weight:700;">5.00</span>
<span class="t" style="left:1328.83px;top:753.00px;font-size:12.5px;">5.00</span>
<span class="t" style="left:1398.83px;top:753.00px;font-size:12.5px;">5.00</span>
<span class="t" style="left:1468.83px;top:753.00px;font-size:12.5px;">5.00</span>
<span class="t" style="left:1538.83px;top:753.00px;font-size:12.5px;">5.00</span>
<span class="t" style="left:1608.83px;top:753.00px;font-size:12.5px;">5.00</span>
<span class="t" style="left:1678.83px;top:753.00px;font-size:12.5px;">5.00</span>
<span class="t" style="left:233.30px;top:803.00px;font-size:12.5px;letter-spacing:-0.190px;">$25m OPEX Savings across the Group by end 2020</span>
<span class="t" style="left:673.20px;top:804.00px;font-size:12.5px;letter-spacing:-0.128px;">Old_Democo</span>
<span class="t" style="left:930.45px;top:802.50px;font-size:12px;letter-spacing:0.742px;">N/A</span>
<span class="t" style="left:992.10px;top:804.00px;font-size:12.5px;letter-spacing:-0.486px;">EVP Beverages</span>
<span class="t" style="left:1195.50px;top:793.50px;font-size:10.3px;letter-spacing:-1.200px;">TARGET</span>
<span class="t" style="left:1195.50px;top:812.50px;font-size:10.3px;letter-spacing:-1.065px;">ACTUAL</span>
<span class="t" style="left:233.30px;top:843.00px;font-size:12.5px;letter-spacing:0.024px;">Develop Manufacturing Excellence culture</span>
<span class="t" style="left:673.20px;top:844.00px;font-size:12.5px;letter-spacing:-0.052px;">Global Operational Excellence</span>
<span class="t" style="left:921.95px;top:842.50px;font-size:12.4px;letter-spacing:-1.495px;">GREEN</span>
<span class="t" style="left:992.10px;top:844.00px;font-size:12.5px;letter-spacing:0.056px;">Chief Transformation ...</span>
<span class="t" style="left:1195.50px;top:833.50px;font-size:10.3px;letter-spacing:-1.200px;">TARGET</span>
<span class="t" style="left:1195.50px;top:852.50px;font-size:10.3px;letter-spacing:-1.065px;">ACTUAL</span>
<span class="t" style="left:233.30px;top:883.00px;font-size:12.5px;letter-spacing:-0.133px;">On-Time Beverages Delivery 90% to 94% by end of 2021</span>
<span class="t" style="left:673.20px;top:884.00px;font-size:12.5px;letter-spacing:-0.468px;">Beverages MFG &amp; SC</span>
<span class="t" style="left:917.55px;top:882.50px;font-size:12.4px;letter-spacing:-1.071px;">YELLOW</span>
<span class="t" style="left:992.10px;top:884.00px;font-size:12.5px;letter-spacing:-0.426px;">MFG &amp; SC Beverages D...</span>
<span class="t" style="left:1195.50px;top:873.50px;font-size:10.3px;letter-spacing:-1.200px;">TARGET</span>
<span class="t" style="left:1195.50px;top:892.50px;font-size:10.3px;letter-spacing:-1.065px;">ACTUAL</span>
<div style="left:1237px;top:154px;width:2px;height:748px;background:#555c70"></div>
<div style="left:1305px;top:154px;width:2px;height:748px;background:#555c70"></div>
</div>
<div style="left:4.0px;top:5.0px;width:40px;height:40px;background:#1c2531;border-radius:50%;box-sizing:border-box;border:1px solid #3a4961;"></div>
<svg style="left:12px;top:13px;" width="24" height="24" viewBox="0 0 24 24"><path fill="#fff" d="M3 18h18v-2H3v2zm0-5h18v-2H3v2zm0-7v2h18V6H3z"/></svg>
<div style="left:4.0px;top:61.0px;width:42px;height:42px;background:#1c2531;border-radius:50%;box-sizing:border-box;border:1px solid #3a4961;"></div>
<svg style="left:13px;top:70px;" width="24" height="24" viewBox="0 0 24 24"><path fill="#fff" d="M10 20v-6h4v6h5v-8h3L12 3 2 12h3v8z"/></svg>
<div style="left:4.0px;top:118.5px;width:40px;height:40px;background:#1c2531;border-radius:50%;box-sizing:border-box;border:1px solid #3a4961;"></div>
<svg style="left:12px;top:126.5px;" width="24" height="24" viewBox="0 0 24 24"><path fill="#fff" d="M12 17.27L18.18 21l-1.64-7.03L22 9.24l-7.19-.61L12 2 9.19 8.63 2 9.24l5.46 4.73L5.82 21z"/></svg>
<div style="left:4.0px;top:175.0px;width:40px;height:40px;background:#1c2531;border-radius:50%;box-sizing:border-box;border:1px solid #3a4961;"></div>
<svg style="left:12px;top:183px;" width="24" height="24" viewBox="0 0 24 24"><path fill="#fff" d="M21 8c-1.45 0-2.26 1.44-1.93 2.51l-3.55 3.56c-.3-.09-.74-.09-1.04 0l-2.55-2.55C12.27 10.45 11.46 9 10 9c-1.45 0-2.27 1.44-1.93 2.52l-4.56 4.55C2.44 15.74 1 16.55 1 18c0 1.1.9 2 2 2 1.45 0 2.26-1.44 1.93-2.51l4.55-4.56c.3.09.74.09 1.04 0l2.55 2.55C12.73 16.55 13.54 18 15 18c1.45 0 2.27-1.44 1.93-2.52l3.56-3.55c1.07.33 2.51-.48 2.51-1.93 0-1.1-.9-2-2-2zM15 9l.94-2.07L18 6l-2.06-.93L15 3l-.92 2.07L12 6l2.08.93zM3.5 11L4 9l2-.5L4 8l-.5-2L3 8l-2 .5L3 9z"/></svg>
<div style="left:4.0px;top:230.5px;width:40px;height:40px;background:#1c2531;border-radius:50%;box-sizing:border-box;border:1px solid #3a4961;"></div>
<svg style="left:12px;top:238.5px;" width="24" height="24" viewBox="0 0 24 24"><path fill="#fff" d="M13 3c-4.97 0-9 4.03-9 9H1l3.89 3.89.07.14L9 12H6c0-3.87 3.13-7 7-7s7 3.13 7 7-3.13 7-7 7c-1.93 0-3.68-.79-4.94-2.06l-1.42 1.42C8.27 19.99 10.51 21 13 21c4.97 0 9-4.03 9-9s-4.03-9-9-9zm-1 5v5l4.28 2.54.72-1.21-3.5-2.08V8H12z"/></svg>
<div style="left:4.0px;top:645.5px;width:40px;height:40px;background:#1c2531;border-radius:50%;box-sizing:border-box;border:1px solid #3a4961;"></div>
<svg style="left:12px;top:653.5px;" width="24" height="24" viewBox="0 0 24 24"><path fill="#fff" d="M15.5 14h-.79l-.28-.27C15.41 12.59 16 11.11 16 9.5 16 5.91 13.09 3 9.5 3S3 5.91 3 9.5 5.91 16 9.5 16c1.61 0 3.09-.59 4.23-1.57l.27.28v.79l5 4.99L20.49 19l-4.99-5zm-6 0C7.01 14 5 11.99 5 9.5S7.01 5 9.5 5 14 7.01 14 9.5 11.99 14 9.5 14z"/></svg>
<div style="left:4.0px;top:701.5px;width:40px;height:40px;background:#1c2531;border-radius:50%;box-sizing:border-box;border:1px solid #3a4961;"></div>
<svg style="left:12px;top:709.5px;" width="24" height="24" viewBox="0 0 24 24"><path fill="#fff" d="M9 21c0 .55.45 1 1 1h4c.55 0 1-.45 1-1v-1H9v1zm3-19C8.14 2 5 5.14 5 9c0 2.38 1.19 4.47 3 5.74V17c0 .55.45 1 1 1h6c.55 0 1-.45 1-1v-2.26c1.81-1.27 3-3.36 3-5.74 0-3.86-3.14-7-7-7zm2.85 11.1l-.85.6V16h-4v-2.3l-.85-.6C7.8 12.16 7 10.63 7 9c0-2.76 2.24-5 5-5s5 2.24 5 5c0 1.63-.8 3.16-2.15 4.1z"/></svg>
<div style="left:4.0px;top:757.5px;width:40px;height:40px;background:#1c2531;border-radius:50%;box-sizing:border-box;border:1px solid #3a4961;"></div>
<svg style="left:12px;top:765.5px;" width="24" height="24" viewBox="0 0 24 24"><path fill="#fff" d="M12 2C6.48 2 2 6.48 2 12s4.48 10 10 10 10-4.48 10-10S17.52 2 12 2zm1 17h-2v-2h2v2zm2.07-7.75l-.9.92C13.45 12.9 13 13.5 13 15h-2v-.5c0-1.1.45-2.1 1.17-2.83l1.24-1.26c.37-.36.59-.86.59-1.41 0-1.1-.9-2-2-2s-2 .9-2 2H8c0-2.21 1.79-4 4-4s4 1.79 4 4c0 .88-.36 1.68-.93 2.25z"/></svg>
<div style="left:4.0px;top:813.5px;width:40px;height:40px;background:#1c2531;border-radius:50%;box-sizing:border-box;border:1px solid #3a4961;"></div>
<svg style="left:12px;top:821.5px;" width="24" height="24" viewBox="0 0 24 24"><path fill="#fff" d="M12 2C6.48 2 2 6.48 2 12s4.48 10 10 10 10-4.48 10-10S17.52 2 12 2zm0 3c1.66 0 3 1.34 3 3s-1.34 3-3 3-3-1.34-3-3 1.34-3 3-3zm0 14.2c-2.5 0-4.71-1.28-6-3.22.03-1.99 4-3.08 6-3.08 1.99 0 5.97 1.09 6 3.08-1.29 1.94-3.5 3.22-6 3.22z"/></svg>
<div style="left:4.0px;top:869.5px;width:40px;height:40px;background:#1c2531;border-radius:50%;box-sizing:border-box;border:1px solid #3a4961;"></div>
<svg style="left:12px;top:877.5px;" width="24" height="24" viewBox="0 0 24 24"><path fill="#fff" d="M4 8h4V4H4v4zm6 12h4v-4h-4v4zm-6 0h4v-4H4v4zm0-6h4v-4H4v4zm6 0h4v-4h-4v4zm6-10v4h4V4h-4zm-6 4h4V4h-4v4zm6 6h4v-4h-4v4zm0 6h4v-4h-4v4z"/></svg>
<div style="left:1566px;top:5px;width:286px;height:40px;background:#2b3044;border:1px solid #3a4961;border-radius:20px;box-sizing:border-box;"></div>
<div style="left:1661px;top:5px;width:96px;height:40px;background:#8db05e;"></div>
<div style="left:1868.0px;top:5.0px;width:40px;height:40px;background:#1c2531;border-radius:50%;box-sizing:border-box;border:1px solid #3a4961;"></div>
<svg style="left:1876px;top:13px;" width="24" height="24" viewBox="0 0 24 24"><path fill="#fff" d="M7 14H5v5h5v-2H7v-3zm-2-4h2V7h3V5H5v5zm12 7h-3v2h5v-5h-2v3zM14 5v2h3v3h2V5h-5z"/></svg>
<div style="left:290px;top:77px;width:10px;height:10px;background:#fff;border-radius:50%;"></div>
<div style="left:546px;top:77px;width:10px;height:10px;background:#b7bcc4;border-radius:50%;"></div>
<div style="left:754.2px;top:77px;width:10px;height:10px;background:#b7bcc4;border-radius:50%;"></div>
<div style="left:951px;top:77px;width:10px;height:10px;background:#b7bcc4;border-radius:50%;"></div>
<div style="left:1147px;top:77px;width:10px;height:10px;background:#b7bcc4;border-radius:50%;"></div>
<div style="left:1337.8px;top:77px;width:10px;height:10px;background:#b7bcc4;border-radius:50%;"></div>
<svg style="left:1549.7px;top:73.8px;" width="16" height="16" viewBox="0 0 24 24"><path fill="#c3c8d0" d="M16 11c1.66 0 2.99-1.34 2.99-3S17.66 5 16 5c-1.66 0-3 1.34-3 3s1.34 3 3 3zm-8 0c1.66 0 2.99-1.34 2.99-3S9.66 5 8 5C6.34 5 5 6.34 5 8s1.34 3 3 3zm0 2c-2.33 0-7 1.17-7 3.5V19h14v-2.5c0-2.33-4.67-3.5-7-3.5zm8 0c-.29 0-.62.02-.97.05 1.16.84 1.97 1.97 1.97 3.45V19h6v-2.5c0-2.33-4.67-3.5-7-3.5z"/></svg>
<svg style="left:1759.6px;top:73.8px;" width="16" height="16" viewBox="0 0 24 24"><path fill="#c3c8d0" d="M16 11c1.66 0 2.99-1.34 2.99-3S17.66 5 16 5c-1.66 0-3 1.34-3 3s1.34 3 3 3zm-8 0c1.66 0 2.99-1.34 2.99-3S9.66 5 8 5C6.34 5 5 6.34 5 8s1.34 3 3 3zm0 2c-2.33 0-7 1.17-7 3.5V19h14v-2.5c0-2.33-4.67-3.5-7-3.5zm8 0c-.29 0-.62.02-.97.05 1.16.84 1.97 1.97 1.97 3.45V19h6v-2.5c0-2.33-4.67-3.5-7-3.5z"/></svg>
<div style="left:92px;top:102px;width:223px;height:3px;background:#8f9fbd;"></div>
<svg style="left:1831px;top:72.1px;" width="18" height="18" viewBox="0 0 24 24"><path fill="#ccd1d8" d="M10 6L8.59 7.41 13.17 12l-4.58 4.59L10 18l6-6z"/></svg>
<div style="left:1868.0px;top:61.0px;width:40px;height:40px;background:#1c2531;border-radius:50%;box-sizing:border-box;border:1px solid #3a4961;"></div>
<svg style="left:1876px;top:69px;" width="24" height="24" viewBox="0 0 24 24"><path fill="#fff" d="M6 10c-1.1 0-2 .9-2 2s.9 2 2 2 2-.9 2-2-.9-2-2-2zm12 0c-1.1 0-2 .9-2 2s.9 2 2 2 2-.9 2-2-.9-2-2-2zm-6 0c-1.1 0-2 .9-2 2s.9 2 2 2 2-.9 2-2-.9-2-2-2z"/></svg>
<svg style="left:130px;top:118.5px" width="24" height="24" viewBox="0 0 24 24"><path fill="#fff" d="M7 10l5 5 5-5z"/></svg>
<div style="left:441.0px;top:120.0px;width:20px;height:20px;background:#1c2531;border-radius:50%;box-sizing:border-box;border:1px solid #3a4961;"></div>
<svg style="left:441.5px;top:120.5px;" width="19" height="19" viewBox="0 0 24 24"><path fill="#fff" d="M6 10c-1.1 0-2 .9-2 2s.9 2 2 2 2-.9 2-2-.9-2-2-2zm12 0c-1.1 0-2 .9-2 2s.9 2 2 2 2-.9 2-2-.9-2-2-2zm-6 0c-1.1 0-2 .9-2 2s.9 2 2 2 2-.9 2-2-.9-2-2-2z"/></svg>
<div style="left:1783.0px;top:120.0px;width:20px;height:20px;background:#1c2531;border-radius:50%;box-sizing:border-box;border:1px solid #3a4961;"></div>
<svg style="left:1784px;top:121px;" width="18" height="18" viewBox="0 0 24 24"><path fill="#fff" d="M10 18h4v-2h-4v2zM3 6v2h18V6H3zm3 7h12v-2H6v2z"/></svg>
<div style="left:54px;top:154px;width:32px;height:38px;background:#353e59;"></div>
<div style="left:88px;top:154px;width:579px;height:38px;background:#353e59;"></div>
<div style="left:669px;top:154px;width:225px;height:38px;background:#353e59;"></div>
<div style="left:896px;top:154px;width:90px;height:38px;background:#353e59;"></div>
<div style="left:988px;top:154px;width:148px;height:38px;background:#353e59;"></div>
<div style="left:1138px;top:154px;width:45px;height:38px;background:#353e59;"></div>
<div style="left:1190px;top:154px;width:47px;height:38px;background:#353e59;"></div>
<div style="left:1239px;top:154px;width:66px;height:38px;background:#353e59;"></div>
<div style="left:1307px;top:154px;width:68px;height:38px;background:#353e59;"></div>
<div style="left:1377px;top:154px;width:68px;height:38px;background:#353e59;"></div>
<div style="left:1447px;top:154px;width:68px;height:38px;background:#353e59;"></div>
<div style="left:1517px;top:154px;width:68px;height:38px;background:#353e59;"></div>
<div style="left:1587px;top:154px;width:68px;height:38px;background:#353e59;"></div>
<div style="left:1657px;top:154px;width:68px;height:38px;background:#353e59;"></div>
<div style="left:1727px;top:154px;width:68px;height:38px;background:#353e59;"></div>
<div style="left:1797px;top:154px;width:68px;height:38px;background:#353e59;"></div>
<div style="left:1867px;top:154px;width:4px;height:38px;background:#353e59;"></div>
<svg style="left:96px;top:167px" width="12" height="15" viewBox="0 0 12 15"><path d="M6 14V1.8M3.3 4.9L6 1.6L8.7 4.9" fill="none" stroke="#ececec" stroke-width="1.5"/></svg>
<div style="left:1184px;top:154px;width:6px;height:758px;background:#555b6c;"></div>
<div style="left:88px;top:904px;width:1095px;height:8px;background:#2b3044;border-radius:4px;"></div>
<div style="left:88px;top:904px;width:571px;height:8px;background:#555b6c;border-radius:4px;"></div>
<div style="left:1190px;top:904px;width:681px;height:8px;background:#2b3044;border-radius:4px;"></div>
<div style="left:1307px;top:904px;width:113px;height:8px;background:#555b6c;border-radius:4px;"></div>
<div style="left:1873px;top:154px;width:8px;height:746px;background:#2b3044;border-radius:4px;"></div>
<div style="left:1873px;top:154px;width:8px;height:39px;background:#555c6c;border-radius:4px;"></div>
<div style="left:1884px;top:154px;width:32px;height:758px;background:#2b3044;box-sizing:border-box;border:2px solid #45556e;"></div>
<div style="left:1884px;top:912px;width:32px;height:1px;background:#45556e;"></div>
<svg style="left:1891.5px;top:163px" width="16.5" height="14" viewBox="0 0 16.5 14"><path d="M0 7L6 0H10.5L4.7 7L10.5 14H6ZM6 7L12 0H16.5L10.7 7L16.5 14H12Z" fill="#fff"/></svg>
<svg style="left:1900.8px;top:916.7px" width="10.4" height="11.8" viewBox="0 0 10.4 11.8"><path d="M0 3.2L5.2 0L10.4 3.2V6.8L5.2 3.6L0 6.8ZM0 8.1L5.2 4.9L10.4 8.1V11.7L5.2 8.5L0 11.7Z" fill="#fff"/></svg>
<span class="t" style="left:61.00px;top:16.00px;font-size:24px;letter-spacing:0.508px;">Bowling Chart</span>
<span class="t" style="left:1585.80px;top:15.00px;font-size:13.5px;letter-spacing:-0.619px;">ARCHIVE</span>
<span class="t" style="left:1696.00px;top:15.00px;font-size:13.5px;letter-spacing:-0.894px;">LIVE</span>
<span class="t" style="left:1778.30px;top:15.00px;font-size:13.5px;letter-spacing:-0.690px;">FUTURE</span>
<span class="t" style="left:104.40px;top:71.00px;font-size:16.5px;letter-spacing:0.058px;">1. Hoshin Bowling Chart</span>
<span class="t" style="left:326.80px;top:71.00px;font-size:16.5px;color:#6f7b8e;letter-spacing:-0.103px;">2. GM Operational Scoreca...</span>
<span class="t" style="left:582.90px;top:71.00px;font-size:16.5px;color:#6f7b8e;letter-spacing:-0.147px;">3. Balanced Scorecard</span>
<span class="t" style="left:791.30px;top:71.00px;font-size:16.5px;color:#6f7b8e;letter-spacing:-0.442px;">4. SQDC Scorecard 1</span>
<span class="t" style="left:987.70px;top:71.00px;font-size:16.5px;color:#6f7b8e;letter-spacing:-0.403px;">4. SQDC Scorecard 2</span>
<span class="t" style="left:1184.40px;top:71.00px;font-size:16.5px;color:#6f7b8e;letter-spacing:-0.244px;">5. OKRs - Corporate</span>
<span class="t" style="left:1375.20px;top:71.00px;font-size:16.5px;color:#6f7b8e;letter-spacing:-0.048px;">6. Strategic Planning</span>
<span class="t" style="left:1574.60px;top:71.00px;font-size:16.5px;color:#6f7b8e;letter-spacing:0.025px;">2. Future Bowler View</span>
<span class="t" style="left:1784.70px;top:71.00px;font-size:16.5px;color:#6f7b8e;letter-spacing:-0.022px;">Bowl</span>
<span class="t" style="left:81.00px;top:120.50px;font-size:11.6px;letter-spacing:-0.754px;">CREATE</span>
<span class="t" style="left:180.60px;top:120.50px;font-size:11.6px;letter-spacing:-0.257px;">DATE RANGE</span>
<span class="t" style="left:278.90px;top:120.50px;font-size:11.6px;letter-spacing:-0.454px;">CREATE NEW USER VIEW</span>
<span class="t" style="left:469.90px;top:120.50px;font-size:11.6px;letter-spacing:-0.191px;">MORE ACTIONS</span>
<span class="t" style="left:1699.40px;top:120.50px;font-size:13px;letter-spacing:0.335px;">Not filtered.</span>
<span class="t" style="left:1811.80px;top:120.50px;font-size:11.6px;letter-spacing:-0.328px;">SHOW FILTER</span>
<span class="t" style="left:112.50px;top:164.00px;font-size:12.5px;letter-spacing:0.019px;">Name</span>
<span class="t" style="left:673.40px;top:164.00px;font-size:12.5px;letter-spacing:-0.045px;">Business Unit</span>
<span class="t" style="left:900.60px;top:164.00px;font-size:12.5px;letter-spacing:-0.045px;">Traffic Light ...</span>
<span class="t" style="left:992.20px;top:164.00px;font-size:12.5px;letter-spacing:0.193px;">Owner</span>
<span class="t" style="left:1142.40px;top:164.00px;font-size:12.5px;letter-spacing:0.149px;">Trend</span>
<span class="t" style="left:1247.90px;top:164.00px;font-size:12.5px;letter-spacing:-0.554px;">YTD 2020</span>
<span class="t" style="left:1316.30px;top:164.00px;font-size:12.5px;letter-spacing:-0.461px;">Jan-2020</span>
<span class="t" style="left:1385.20px;top:164.00px;font-size:12.5px;letter-spacing:-0.217px;">Feb-2020</span>
<span class="t" style="left:1454.30px;top:164.00px;font-size:12.5px;letter-spacing:0.029px;">Mar-2020</span>
<span class="t" style="left:1525.20px;top:164.00px;font-size:12.5px;letter-spacing:-0.005px;">Apr-2020</span>
<span class="t" style="left:1593.70px;top:164.00px;font-size:12.5px;letter-spacing:-0.156px;">May-2020</span>
<span class="t" style="left:1665.50px;top:164.00px;font-size:12.5px;letter-spacing:-0.275px;">Jun-2020</span>
<span class="t" style="left:1737.70px;top:164.00px;font-size:12.5px;letter-spacing:-0.350px;">Jul-2020</span>
<span class="t" style="left:1804.50px;top:164.00px;font-size:12.5px;letter-spacing:-0.203px;">Aug-2020</span>
<span class="t" style="left:1875.90px;top:204.70px;font-size:12.5px;letter-spacing:-0.878px;width:49.80px;transform:rotate(-90deg);">MANAGE</span>
</body></html>
